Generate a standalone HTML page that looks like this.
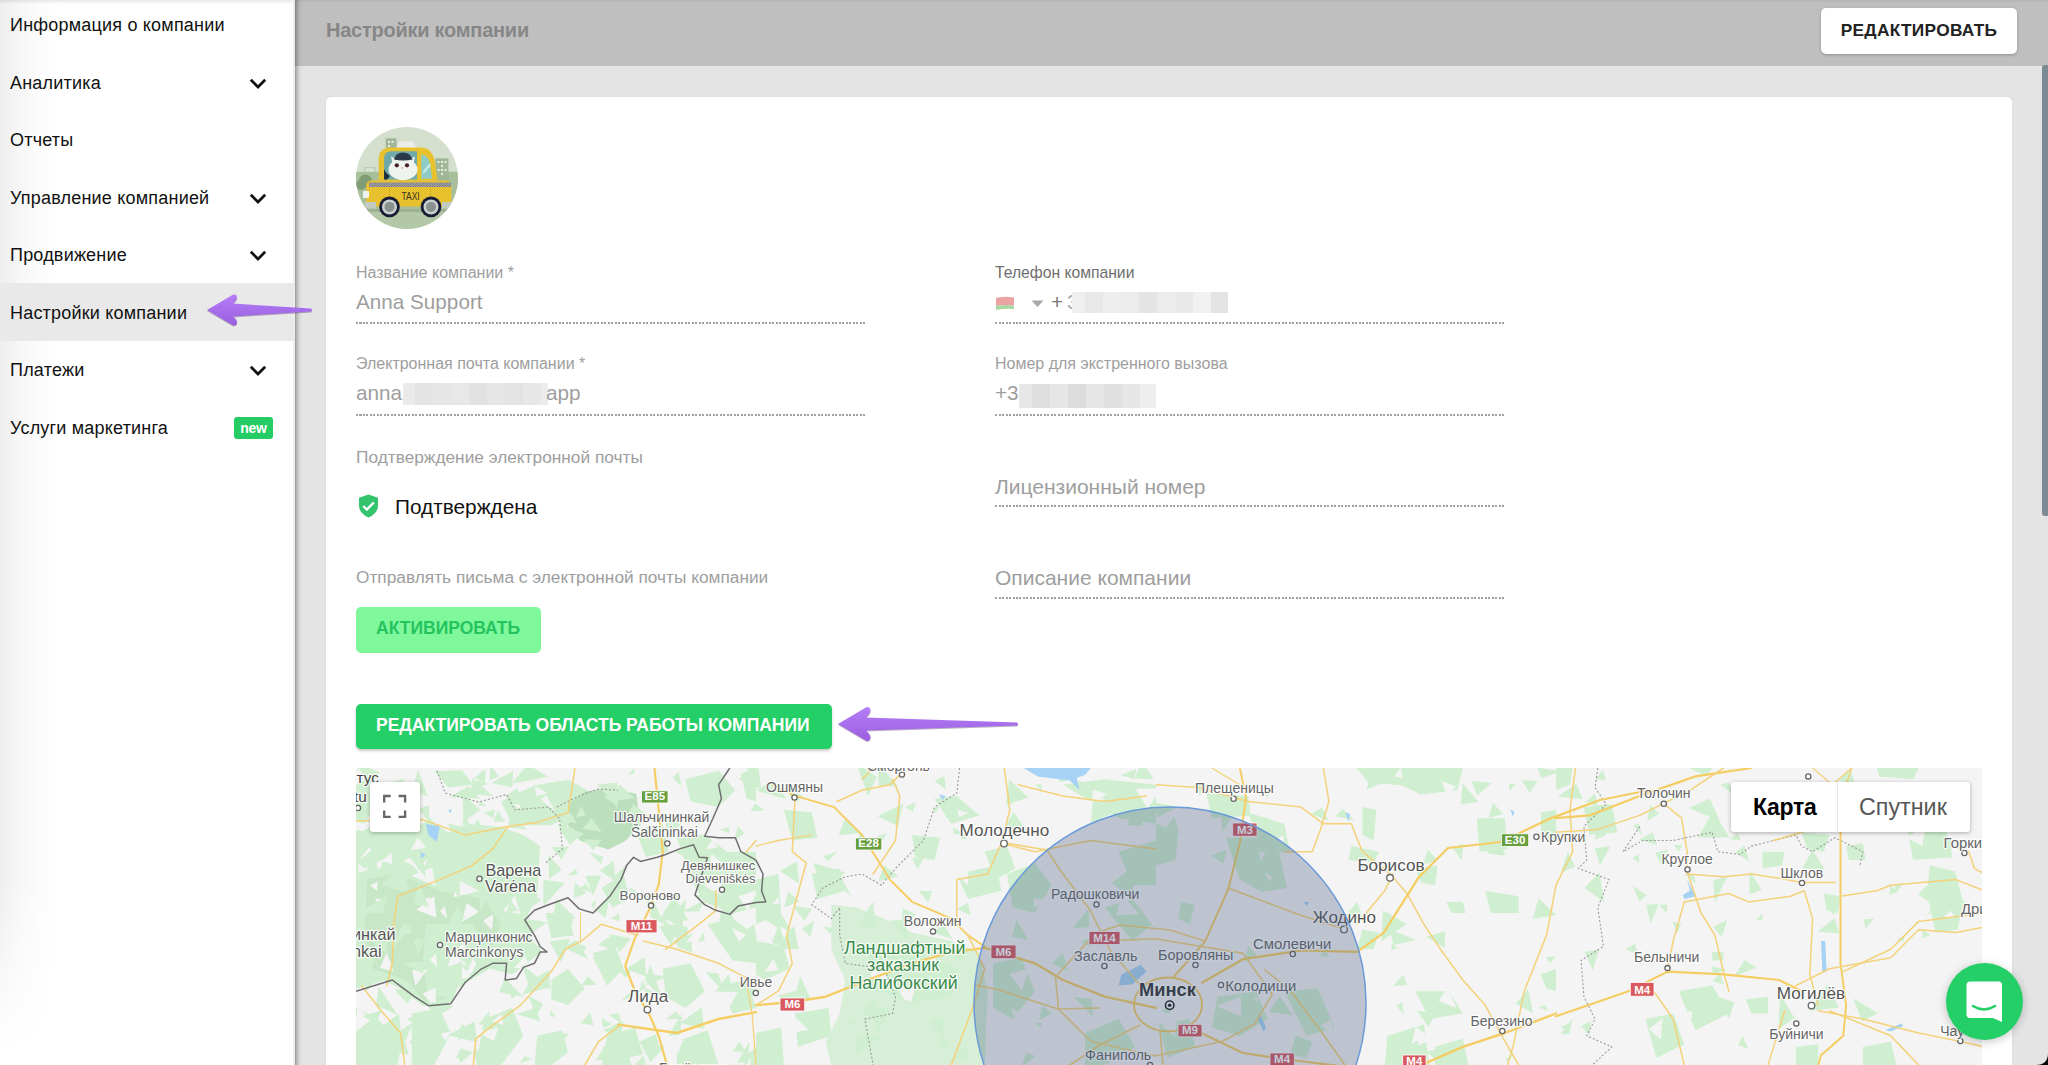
<!DOCTYPE html>
<html><head><meta charset="utf-8">
<style>
*{box-sizing:border-box;margin:0;padding:0}
html,body{width:2048px;height:1065px;overflow:hidden;background:#e4e4e4;font-family:"Liberation Sans",sans-serif}
.abs{position:absolute}
#sidebar{position:absolute;left:0;top:0;width:293px;height:1065px;background:#fff;z-index:5}
#sidebar .grad{position:absolute;left:0;top:0;width:60px;height:1065px;background:linear-gradient(90deg,#eeeeee 0,#f7f7f7 20px,#fcfcfc 40px,#fff 60px);-webkit-mask-image:linear-gradient(180deg,#000 0,#000 880px,rgba(0,0,0,0) 1050px);mask-image:linear-gradient(180deg,#000 0,#000 880px,rgba(0,0,0,0) 1050px)}
#sidebar .topgrad{position:absolute;left:0;top:0;width:293px;height:5px;background:linear-gradient(180deg,rgba(0,0,0,0.09) 0,rgba(0,0,0,0.03) 2.5px,rgba(0,0,0,0) 5px)}
.item{position:absolute;left:0;width:293px;height:58px;font-size:18px;color:#111;letter-spacing:0.2px}
.item span{position:absolute;left:10px;top:21px;line-height:18px;white-space:nowrap}
.item svg{position:absolute;left:249px;top:25px}
.active{background:#e9e9e9}
#shadow{position:absolute;left:293px;top:0;width:10px;height:1065px;background:linear-gradient(90deg,#ececec 0,#ececec 2px,rgba(0,0,0,0.33) 2px,rgba(0,0,0,0.17) 4px,rgba(0,0,0,0.05) 6.5px,rgba(0,0,0,0) 9px);z-index:4}
#header{position:absolute;left:293px;top:0;width:1755px;height:66px;background:linear-gradient(180deg,#b3b3b3 0,#bfbfbf 3px,#bfbfbf 100%)}
#header .title{position:absolute;left:33px;top:20px;font-size:20px;font-weight:700;color:#878787;line-height:21px;white-space:nowrap;letter-spacing:-0.25px}
#editbtn{position:absolute;left:1821px;top:8px;width:196px;height:46px;background:#fff;border-radius:5px;box-shadow:0 1px 3px rgba(0,0,0,.25);font-size:17.3px;font-weight:700;color:#222;text-align:center;line-height:44px;letter-spacing:0.3px}
#card{position:absolute;left:326px;top:97px;width:1686px;height:1000px;background:#fff;border-radius:5px;box-shadow:0 0 2px rgba(0,0,0,.08)}
#scroll{position:absolute;left:2042px;top:65px;width:6px;height:451px;background:#7b8a93;border-radius:3px 0 0 3px}
.lbl{position:absolute;font-size:16px;color:#9e9e9e;line-height:16px;white-space:nowrap}
.val{position:absolute;font-size:20.7px;color:#9e9e9e;line-height:21px;white-space:nowrap}
.dot{position:absolute;height:2px;background:repeating-linear-gradient(90deg,#a0a0a0 0,#a0a0a0 2px,transparent 2px,transparent 3.5px)}
.blur{position:absolute;display:flex;filter:blur(0.6px)}
.blur i{display:block;height:100%}
.sec{position:absolute;font-size:17.3px;color:#9e9e9e;line-height:17px;white-space:nowrap}
</style></head><body>

<div id="header"><div class="title">Настройки компании</div></div>
<div id="editbtn">РЕДАКТИРОВАТЬ</div>
<div id="scroll"></div>

<div id="card"></div>

<!-- avatar -->
<svg class="abs" style="left:356px;top:127px" width="102" height="102" viewBox="0 0 102 102">
  <defs><clipPath id="avc"><circle cx="51" cy="51" r="51"/></clipPath></defs>
  <g clip-path="url(#avc)">
    <rect width="102" height="102" fill="#d4dfcd"/>
    <rect x="0" y="44.8" width="102" height="40" fill="#a8bf9b"/>
    <rect x="0" y="84" width="102" height="18" fill="#b3c8a6"/>
    <rect x="0" y="82" width="102" height="3" fill="#9db292"/>
    <rect x="29.7" y="11.3" width="10.8" height="34" fill="#9fb796"/>
    <rect x="32" y="14" width="2" height="2" fill="#e8efe4"/><rect x="35.5" y="14" width="2" height="2" fill="#e8efe4"/><rect x="32" y="18" width="2" height="2" fill="#e8efe4"/>
    <rect x="79.4" y="31.3" width="13" height="24" fill="#9fb796"/>
    <rect x="81.5" y="34" width="2" height="2" fill="#e8efe4"/><rect x="85" y="34" width="2" height="2" fill="#e8efe4"/><rect x="88.5" y="34" width="2" height="2" fill="#e8efe4"/><rect x="85" y="38" width="2" height="2" fill="#e8efe4"/><rect x="81.5" y="42" width="2" height="2" fill="#e8efe4"/><rect x="85" y="42" width="2" height="2" fill="#e8efe4"/><rect x="88.5" y="42" width="2" height="2" fill="#e8efe4"/><rect x="85" y="46" width="2" height="2" fill="#e8efe4"/>
    <rect x="8.1" y="40" width="11.3" height="5" fill="#b9ccb2"/><rect x="9.5" y="41.5" width="8.5" height="1" fill="#eef3ea"/><rect x="9.5" y="43.3" width="8.5" height="1" fill="#eef3ea"/>
    <circle cx="9.5" cy="54" r="6.5" fill="#7f9c75"/><circle cx="5" cy="58" r="5" fill="#7f9c75"/>
    <path d="M40.5 21 L43 14.6 L57 14.3 L60 21 Z" fill="#ececec"/>
    <path d="M22.7 53.4 L22.7 32 Q23 21 34 20.5 L67 20.5 Q76 21.5 79 34 L81.5 53.4 Z" fill="#e7c12e"/>
    <path d="M28.1 52.4 L28.1 31 Q28.5 24.3 35 24.3 L61 24.3 L61 52.4 Z" fill="#6fa9a9"/>
    <path d="M65.3 27.5 Q72 28 74 36 L76.1 51.8 L65.3 51.8 Z" fill="#8fcbc5"/>
    <path d="M67 44 L74 36 L74.5 39 L67.5 47 Z" fill="#c9ece8"/>
    <ellipse cx="47" cy="42.5" rx="14.5" ry="10.5" fill="#eef3ee"/><path d="M37.5 33 L37 30 L40 32 Z" fill="#f2a5a5"/><path d="M56.5 33 L57 30 L54 32 Z" fill="#f2a5a5"/>
    <path d="M36.5 37 L35 29.5 L41 33 Z" fill="#eef3ee"/><path d="M57.5 37 L59 29.5 L53 33 Z" fill="#eef3ee"/>
    <path d="M37.8 32.5 Q40 25.4 47 25.4 Q54 25.4 56.7 32.5 Q47 34.5 37.8 32.5 Z" fill="#2b3a4a"/>
    <circle cx="40.8" cy="38.3" r="2.1" fill="#4a1f2a"/><circle cx="51" cy="38.3" r="2.1" fill="#4a1f2a"/>
    <path d="M45 40.5 L47.5 40.5 L46.2 42 Z" fill="#ef7a6a"/>
    <path d="M28.1 42 Q30 47 34 49 L31 52.4 L28.1 52.4 Z" fill="#1e2c3c"/>
    <rect x="10.3" y="53.5" width="85" height="26" rx="5" fill="#e7c12e"/>
    <pattern id="chk" x="0" y="55.5" width="2.4" height="4.8" patternUnits="userSpaceOnUse"><rect width="2.4" height="4.8" fill="#f4f4f4"/><rect width="1.2" height="1.2" fill="#26283a"/><rect x="1.2" y="1.2" width="1.2" height="1.2" fill="#26283a"/><rect y="2.4" width="1.2" height="1.2" fill="#26283a"/><rect x="1.2" y="3.6" width="1.2" height="1.2" fill="#26283a"/></pattern>
    <rect x="13" y="55.5" width="82" height="4.5" fill="url(#chk)"/>
    <rect x="33" y="60" width="0.6" height="15" fill="#cfa51e"/><rect x="74" y="60" width="0.6" height="15" fill="#cfa51e"/>
    <text x="45.5" y="73.5" font-size="10" fill="#3a3320" font-family="Liberation Sans" transform="scale(0.85 1)" transform-origin="45.5 73.5">TAXI</text>
    <rect x="7" y="64" width="6" height="7" rx="1" fill="#f1f3ee"/>
    <rect x="9" y="75" width="11" height="6.5" fill="#c3cbc2"/><rect x="86" y="75" width="9" height="6.5" fill="#c3cbc2"/>
    <circle cx="33.5" cy="79.9" r="10.3" fill="#191c36"/><circle cx="33.5" cy="79.9" r="7.5" fill="#c9d0cf"/><circle cx="33.5" cy="79.9" r="5" fill="#8b918f"/>
    <circle cx="75" cy="79.9" r="10.3" fill="#191c36"/><circle cx="75" cy="79.9" r="7.5" fill="#c9d0cf"/><circle cx="75" cy="79.9" r="5" fill="#8b918f"/>
  </g>
</svg>

<div class="lbl" style="left:356px;top:265px;font-size:16px">Название компании *</div>
<div class="val" style="left:356px;top:291px">Anna Support</div>
<div class="dot" style="left:356px;top:322px;width:509px"></div>

<div class="lbl" style="left:356px;top:356px">Электронная почта компании *</div>
<div class="val" style="left:356px;top:382px">anna</div>
<div class="blur" style="left:403px;top:383px;width:145px;height:22px"><i style="width:12px;background:#eaeaea"></i><i style="width:18px;background:#e4e4e4"></i><i style="width:18px;background:#e6e6e6"></i><i style="width:18px;background:#e8e8e8"></i><i style="width:18px;background:#e2e2e2"></i><i style="width:18px;background:#e6e6e6"></i><i style="width:18px;background:#e3e3e3"></i><i style="width:18px;background:#e7e7e7"></i><i style="width:7px;background:#ececec"></i></div>
<div class="val" style="left:546px;top:382px">app</div>
<div class="dot" style="left:356px;top:414px;width:509px"></div>

<div class="sec" style="left:356px;top:449px">Подтверждение электронной почты</div>
<svg class="abs" style="left:358px;top:494px" width="21" height="24" viewBox="0 0 21 24">
  <path d="M10.5 0.5 L20 3.8 L20 11 Q20 19.5 10.5 23.5 Q1 19.5 1 11 L1 3.8 Z" fill="#33c46d"/>
  <path d="M5.2 12 L8.8 15.5 L15.8 8.5" fill="none" stroke="#fff" stroke-width="2.4"/>
</svg>
<div class="val" style="left:395px;top:496px;font-size:20.8px;color:#111">Подтверждена</div>

<div class="sec" style="left:356px;top:569px">Отправлять письма с электронной почты компании</div>
<div class="abs" style="left:356px;top:607px;width:185px;height:46px;background:#7ff89c;border-radius:5px;color:#25c45f;font-size:17.5px;font-weight:700;line-height:42px;padding-left:20px;white-space:nowrap">АКТИВИРОВАТЬ</div>

<div class="abs" style="left:356px;top:704px;width:476px;height:45px;background:#23cf66;border-radius:5px;box-shadow:0 2px 3px rgba(0,0,0,.22);color:#fff;font-size:17.5px;font-weight:700;line-height:42.5px;padding-left:20px;white-space:nowrap">РЕДАКТИРОВАТЬ ОБЛАСТЬ РАБОТЫ КОМПАНИИ</div>

<!-- right column -->
<div class="lbl" style="left:995px;top:265px;font-size:15.7px;color:#6e6e6e">Телефон компании</div>
<svg class="abs" style="left:995px;top:296px" width="20" height="15" viewBox="0 0 20 15">
  <path d="M1 2 Q10 0 19 1.5 L19 9.5 Q10 8.5 1 10 Z" fill="#eaa2a2"/>
  <path d="M1 10 Q10 8.5 19 9.5 L19 13 Q10 12 1 14 Z" fill="#a9d8a3"/>
</svg>
<svg class="abs" style="left:1031px;top:300px" width="13" height="8" viewBox="0 0 13 8"><path d="M0.5 0.5 L12.5 0.5 L6.5 7 Z" fill="#a8a8a8"/></svg>
<div class="val" style="left:1051px;top:291px;color:#7a7a7a">+</div>
<div class="val" style="left:1067px;top:291px;color:#aaa;width:7px;overflow:hidden">3</div>
<div class="blur" style="left:1072px;top:292px;width:156px;height:21px"><i style="width:13px;background:#efefef"></i><i style="width:18px;background:#e8e8e8"></i><i style="width:18px;background:#eeeeee"></i><i style="width:18px;background:#ececec"></i><i style="width:18px;background:#e4e4e4"></i><i style="width:18px;background:#ececec"></i><i style="width:18px;background:#e9e9e9"></i><i style="width:18px;background:#f1f1f1"></i><i style="width:17px;background:#e3e3e3"></i></div>
<div class="dot" style="left:995px;top:322px;width:509px"></div>

<div class="lbl" style="left:995px;top:356px">Номер для экстренного вызова</div>
<div class="val" style="left:995px;top:382px">+3</div>
<div class="blur" style="left:1019px;top:384px;width:137px;height:24px"><i style="width:13px;background:#e7e7e7"></i><i style="width:18px;background:#dedede"></i><i style="width:18px;background:#e6e6e6"></i><i style="width:18px;background:#dcdcdc"></i><i style="width:18px;background:#e6e6e6"></i><i style="width:18px;background:#e0e0e0"></i><i style="width:18px;background:#e6e6e6"></i><i style="width:16px;background:#eeeeee"></i></div>
<div class="dot" style="left:995px;top:414px;width:509px"></div>

<div class="val" style="left:995px;top:476px;font-size:21px">Лицензионный номер</div>
<div class="dot" style="left:995px;top:505px;width:509px"></div>

<div class="val" style="left:995px;top:567px;font-size:21px">Описание компании</div>
<div class="dot" style="left:995px;top:597px;width:509px"></div>

<!-- arrow 2 -->
<svg class="abs" style="left:832px;top:702px" width="192" height="44" viewBox="0 0 192 44">
  <defs><linearGradient id="ag2" x1="0" y1="0" x2="0" y2="1"><stop offset="0" stop-color="#b57ef7"/><stop offset="1" stop-color="#9a5ee0"/></linearGradient></defs>
  <path d="M6 22 L33 6 Q37.5 3.5 38.5 8 Q39 11 34 15.5 L185 20.5 Q187 22 185 23.5 L34 28.5 Q39 33 38.5 36 Q37.5 40.5 33 38 Z" fill="url(#ag2)" style="filter:drop-shadow(0 1px 0.6px rgba(60,30,90,0.35))"/>
</svg>

<div id="sidebar">
  <div class="grad"></div><div class="topgrad"></div>
  <div class="item" style="top:-5px"><span>Информация о компании</span></div>
  <div class="item" style="top:53px"><span>Аналитика</span><svg width="18" height="12" viewBox="0 0 18 12"><path d="M1.8 1.8 L9 9 L16.2 1.8" fill="none" stroke="#111" stroke-width="2.7"/></svg></div>
  <div class="item" style="top:110px"><span>Отчеты</span></div>
  <div class="item" style="top:168px"><span>Управление компанией</span><svg width="18" height="12" viewBox="0 0 18 12"><path d="M1.8 1.8 L9 9 L16.2 1.8" fill="none" stroke="#111" stroke-width="2.7"/></svg></div>
  <div class="item" style="top:225px"><span>Продвижение</span><svg width="18" height="12" viewBox="0 0 18 12"><path d="M1.8 1.8 L9 9 L16.2 1.8" fill="none" stroke="#111" stroke-width="2.7"/></svg></div>
  <div class="item active" style="top:283px"><span>Настройки компании</span></div>
  <div class="item" style="top:340px"><span>Платежи</span><svg width="18" height="12" viewBox="0 0 18 12"><path d="M1.8 1.8 L9 9 L16.2 1.8" fill="none" stroke="#111" stroke-width="2.7"/></svg></div>
  <div class="item" style="top:398px"><span>Услуги маркетинга</span><div style="position:absolute;left:234px;top:19px;width:39px;height:22px;background:#24cc64;border-radius:3px;color:#fff;font-size:14px;font-weight:700;line-height:22px;text-align:center;letter-spacing:-0.2px">new</div></div>
</div>
<div id="shadow"></div>

<!-- sidebar arrow -->
<svg class="abs" style="left:200px;top:288px;z-index:6" width="120" height="44" viewBox="0 0 120 44">
  <defs><linearGradient id="ag1" x1="0" y1="0" x2="0" y2="1"><stop offset="0" stop-color="#b57ef7"/><stop offset="1" stop-color="#9a5ee0"/></linearGradient></defs>
  <path d="M7 22 L31.5 7.5 Q36 5 37 9 Q37.5 12 33 15.5 L111 20.5 Q113 22 111 23.5 L33 28.5 Q37.5 32 37 35 Q36 39 31.5 36.5 Z" fill="url(#ag1)" style="filter:drop-shadow(0 1px 0.6px rgba(60,30,90,0.35))"/>
</svg>

<!--MAP-->
<svg class="abs" style="left:356px;top:768px" width="1626" height="297" viewBox="0 0 1626 297" font-family="Liberation Sans">
<defs><clipPath id="mapclip"><rect width="1626" height="297"/></clipPath></defs>
<g clip-path="url(#mapclip)">
<rect width="1626" height="297" fill="#f4f4f4"/>
<polygon points="0.0,66.9 16.7,57.2 44.6,63.6 69.7,48.0 92.1,64.7 111.6,55.8 145.0,59.1 167.4,66.9 184.1,78.1 181.3,128.3 170.2,150.6 178.5,167.4 185.5,184.1 156.2,206.4 133.9,200.8 111.6,213.4 92.1,237.1 66.9,237.7 44.6,220.9 27.9,212.6 0.0,220.9" fill="#d0efd0"/>
<polygon points="11.2,111.6 39.1,105.4 83.7,122.7 128.3,131.1 145.0,156.2 131.1,189.7 106.0,212.0 89.3,231.5 69.7,234.3 50.2,212.0 16.7,200.8 8.4,167.4" fill="#c7e7c7"/>
<polygon points="69.7,156.2 117.2,156.2 131.1,178.5 111.6,212.0 89.3,228.7 72.5,228.7 66.9,195.3" fill="#d0efd0"/>
<polygon points="145.0,33.5 178.5,17.3 212.0,11.7 231.5,22.3 214.8,47.4 195.3,57.2 156.2,57.2" fill="#d0efd0"/>
<polygon points="212.0,36.3 228.7,23.7 251.0,20.1 280.3,25.7 284.5,57.2 269.2,73.1 252.4,81.5 224.5,73.1 211.4,57.2" fill="#bbe0bb"/>
<polygon points="78.1,3.3 106.0,2.2 117.2,16.7 92.1,19.5" fill="#d0efd0"/>
<polygon points="0.0,16.7 11.2,11.2 19.5,36.3 8.4,55.8 0.0,53.0" fill="#d0efd0"/>
<polygon points="320.8,69.7 348.7,66.4 371.0,83.7 400.0,83.7 400.0,139.5 376.6,145.6 348.7,134.4 334.7,111.6" fill="#d0efd0"/>
<polygon points="329.1,11.2 362.6,2.8 379.4,22.3 362.6,39.1 334.7,33.5" fill="#d0efd0"/>
<polygon points="384.9,5.6 400.0,0.0 400.0,33.5 390.5,30.7" fill="#d0efd0"/>
<polygon points="0.0,239.9 22.3,251.0 44.6,278.9 41.8,297.1 0.0,297.1" fill="#d0efd0"/>
<polygon points="55.8,245.5 83.7,240.4 94.8,265.6 78.1,297.1 55.8,297.1" fill="#d0efd0"/>
<polygon points="128.3,251.0 156.2,239.9 167.4,267.8 145.0,297.1 119.9,297.1" fill="#d0efd0"/>
<polygon points="195.3,212.0 212.0,200.8 228.7,220.4 212.0,237.1 195.3,231.5" fill="#d0efd0"/>
<polygon points="237.1,189.7 259.4,178.5 267.8,200.8 251.0,217.6" fill="#d0efd0"/>
<polygon points="306.8,200.8 334.7,195.3 348.7,223.2 329.1,239.9 309.6,228.7" fill="#d0efd0"/>
<polygon points="351.5,156.2 376.6,150.6 400.0,167.4 400.0,195.3 376.6,192.5" fill="#d0efd0"/>
<polygon points="320.8,273.4 351.5,262.2 362.6,297.1 320.8,297.1" fill="#d0efd0"/>
<polygon points="251.0,267.8 278.9,259.4 290.1,297.1 245.5,297.1" fill="#d0efd0"/>
<polygon points="181.3,267.8 206.4,262.2 212.0,284.5 195.3,297.1 178.5,297.1" fill="#d0efd0"/>
<polygon points="362.6,217.6 390.5,212.0 400.0,239.9 376.6,245.5" fill="#d0efd0"/>
<polygon points="189.7,145.0 212.0,145.0 217.6,167.4 195.3,170.2" fill="#d0efd0"/>
<polygon points="245.5,119.9 267.8,106.0 273.4,131.1 256.6,139.5" fill="#d0efd0"/>
<polygon points="278.9,61.4 306.8,55.8 312.4,83.7 290.1,89.3" fill="#d0efd0"/>
<polygon points="475.3,136.7 500.4,139.5 528.3,150.6 556.2,164.6 595.3,172.9 623.2,184.1 631.5,223.2 628.7,297.1 475.3,297.1 469.7,273.4 483.7,245.5 489.3,212.0 475.3,181.3" fill="#d6efd6"/>
<polygon points="511.6,181.3 556.2,178.5 600.8,200.8 595.3,228.7 556.2,234.3 517.2,220.4" fill="#d0efd0"/>
<polygon points="578.5,30.7 600.8,27.9 623.2,47.4 595.3,55.8" fill="#d0efd0"/>
<polygon points="427.9,41.8 455.8,44.6 461.4,69.7 436.3,72.5" fill="#d0efd0"/>
<polygon points="400.0,111.6 422.3,106.0 425.1,145.0 400.0,156.2" fill="#d0efd0"/>
<polygon points="706.8,16.7 748.7,11.2 800.0,16.7 800.0,55.8 762.6,50.2 734.7,33.5" fill="#d0efd0"/>
<polygon points="600.8,106.0 639.9,97.6 645.5,122.7 612.0,131.1" fill="#d0efd0"/>
<polygon points="556.2,66.9 584.1,69.7 578.5,92.1 559.0,89.3" fill="#d0efd0"/>
<polygon points="400.0,172.9 427.9,178.5 433.5,200.8 408.4,212.0 400.0,206.4" fill="#d0efd0"/>
<polygon points="439.1,245.5 472.5,239.9 475.3,267.8 441.8,278.9" fill="#d0efd0"/>
<polygon points="400.0,265.0 425.1,259.4 427.9,297.1 400.0,297.1" fill="#d0efd0"/>
<polygon points="628.7,83.7 651.0,78.1 659.4,100.4 639.9,111.6" fill="#d0efd0"/>
<polygon points="455.8,106.0 483.7,100.4 489.3,122.7 461.4,131.1" fill="#d0efd0"/>
<polygon points="651.0,106.0 678.9,94.8 695.7,117.2 678.9,145.0 656.6,139.5" fill="#d0efd0"/>
<polygon points="637.1,195.3 665.0,189.7 678.9,223.2 656.6,251.0 637.1,239.9" fill="#d0efd0"/>
<polygon points="748.7,139.5 776.6,131.1 796.1,156.2 776.6,172.9" fill="#d0efd0"/>
<polygon points="729.1,265.0 762.6,251.0 779.4,278.9 748.7,297.1 729.1,297.1" fill="#d0efd0"/>
<polygon points="762.6,83.7 800.0,72.5 800.0,117.2 776.6,117.2" fill="#d0efd0"/>
<polygon points="1000.8,0.0 1106.8,0.0 1101.3,22.3 1065.0,26.5 1045.5,17.3 1012.0,14.5" fill="#d0efd0"/>
<polygon points="1006.4,0.0 1028.7,0.0 1025.9,16.7 1012.0,11.2" fill="#d0efd0"/>
<polygon points="850.2,25.1 892.1,27.9 894.8,47.4 855.8,50.2" fill="#d0efd0"/>
<polygon points="892.1,44.6 928.3,55.8 933.9,83.7 906.0,83.7" fill="#d0efd0"/>
<polygon points="1006.4,39.1 1020.4,41.8 1017.6,72.5 1006.4,66.9" fill="#d0efd0"/>
<polygon points="995.3,78.1 1023.2,83.7 1017.6,94.8 992.5,92.1" fill="#d0efd0"/>
<polygon points="1059.4,223.2 1092.9,223.2 1106.8,245.5 1073.4,251.0" fill="#d0efd0"/>
<polygon points="1129.1,122.7 1162.6,128.3 1162.6,145.0 1134.7,145.0" fill="#d0efd0"/>
<polygon points="1090.1,133.9 1106.8,133.9 1109.6,145.0 1095.7,145.0" fill="#d0efd0"/>
<polygon points="1120.8,50.2 1148.7,50.2 1151.5,80.9 1123.6,83.7" fill="#d0efd0"/>
<polygon points="1059.4,100.4 1081.7,97.6 1078.9,117.2 1065.0,114.4" fill="#d0efd0"/>
<polygon points="1031.5,267.8 1067.8,256.6 1073.4,297.1 1028.7,297.1" fill="#d0efd0"/>
<polygon points="1078.9,278.9 1106.8,270.6 1112.4,297.1 1078.9,297.1" fill="#d0efd0"/>
<polygon points="1184.9,206.4 1200.0,200.8 1200.0,223.2 1190.5,220.4" fill="#d0efd0"/>
<polygon points="1184.9,44.6 1200.0,41.8 1200.0,72.5 1184.9,66.9" fill="#d0efd0"/>
<polygon points="1006.4,161.8 1023.2,164.6 1017.6,181.3 1000.8,181.3" fill="#d0efd0"/>
<polygon points="869.7,69.7 919.9,69.7 931.1,119.9 906.0,124.1 883.7,111.6" fill="#d0efd0"/>
<polygon points="800.0,55.8 822.3,64.2 819.5,92.1 800.0,97.6" fill="#d0efd0"/>
<polygon points="928.3,223.2 961.8,220.4 978.5,259.4 950.6,267.8" fill="#d0efd0"/>
<polygon points="861.4,228.7 900.4,223.2 911.6,251.0 883.7,267.8 855.8,259.4" fill="#d0efd0"/>
<polygon points="825.1,133.9 839.1,136.7 833.5,156.2 822.3,150.6" fill="#d0efd0"/>
<polygon points="939.5,267.8 956.2,273.4 950.6,290.1 933.9,287.3" fill="#d0efd0"/>
<polygon points="802.8,256.6 833.5,251.0 839.1,278.9 811.2,290.1" fill="#d0efd0"/>
<polygon points="1227.9,39.1 1255.8,36.3 1261.4,64.2 1233.5,66.9" fill="#d0efd0"/>
<polygon points="1551.5,61.4 1590.5,64.2 1596.1,89.3 1557.0,92.1" fill="#d0efd0"/>
<polygon points="1573.8,97.6 1598.9,103.2 1607.3,133.9 1601.7,161.8 1579.4,164.6 1571.0,125.5" fill="#d0efd0"/>
<polygon points="1289.3,251.0 1317.2,245.5 1328.3,276.2 1300.4,290.1" fill="#d0efd0"/>
<polygon points="1322.7,223.2 1356.2,217.6 1372.9,245.5 1339.5,262.2" fill="#d0efd0"/>
<polygon points="1361.8,228.7 1378.5,234.3 1372.9,251.0" fill="#d0efd0"/>
<polygon points="1389.7,231.5 1412.0,228.7 1412.0,245.5 1395.3,245.5" fill="#d0efd0"/>
<polygon points="1467.8,125.5 1484.5,128.3 1481.7,145.0 1470.6,142.3" fill="#d0efd0"/>
<polygon points="1445.5,64.2 1473.4,66.9 1467.8,83.7 1451.0,80.9" fill="#d0efd0"/>
<polygon points="1406.4,83.7 1428.7,83.7 1425.9,97.6 1406.4,100.4" fill="#d0efd0"/>
<polygon points="1356.2,184.1 1367.4,184.1 1367.4,192.5 1356.2,192.5" fill="#d0efd0"/>
<polygon points="1303.2,136.7 1311.6,136.7 1310.2,145.0" fill="#d0efd0"/>
<polygon points="1490.1,78.1 1506.8,75.3 1509.6,92.1 1492.9,92.1" fill="#d0efd0"/>
<polygon points="1200.0,0.0 1216.7,0.0 1213.9,16.7 1200.0,22.3" fill="#d0efd0"/>
<polygon points="1333.9,0.0 1356.2,0.0 1350.6,8.4" fill="#d0efd0"/>
<polygon points="1364.6,16.7 1372.9,13.9 1375.7,25.1" fill="#d0efd0"/>
<polygon points="1520.8,0.0 1562.6,0.0 1557.0,11.2 1523.6,8.4" fill="#d0efd0"/>
<polygon points="1506.8,278.9 1534.7,273.4 1540.3,297.1 1506.8,297.1" fill="#d0efd0"/>
<polygon points="1439.9,278.9 1462.2,276.2 1462.2,297.1 1439.9,297.1" fill="#d0efd0"/>
<clipPath id="gc0"><polygon points="0.0,66.9 16.7,57.2 44.6,63.6 69.7,48.0 92.1,64.7 111.6,55.8 145.0,59.1 167.4,66.9 184.1,78.1 181.3,128.3 170.2,150.6 178.5,167.4 185.5,184.1 156.2,206.4 133.9,200.8 111.6,213.4 92.1,237.1 66.9,237.7 44.6,220.9 27.9,212.6 0.0,220.9"/></clipPath><g clip-path="url(#gc0)"><polygon points="70.0,79.7 54.7,82.2 61.8,69.5" fill="#f4f4f4"/><polygon points="123.4,123.1 97.2,129.6 102.2,112.0" fill="#f4f4f4"/><polygon points="2.6,92.9 13.9,78.6 17.9,92.0" fill="#f4f4f4"/><polygon points="73.6,191.7 79.8,185.6 81.4,198.9" fill="#f4f4f4"/><polygon points="88.5,168.2 92.5,174.6 86.3,176.0" fill="#f4f4f4"/><polygon points="27.7,90.9 24.0,101.3 17.8,95.5" fill="#f4f4f4"/><polygon points="25.8,92.7 35.5,84.4 36.2,96.2" fill="#f4f4f4"/><polygon points="169.3,188.0 174.2,200.9 157.9,199.7" fill="#f4f4f4"/><polygon points="21.4,113.7 21.3,123.2 14.1,117.2" fill="#f4f4f4"/><polygon points="65.0,106.2 52.4,94.1 72.5,89.1" fill="#f4f4f4"/><polygon points="30.6,184.8 37.8,203.3 24.0,199.9" fill="#f4f4f4"/><polygon points="1.5,91.8 14.5,100.6 2.9,105.1" fill="#f4f4f4"/><polygon points="158.9,127.4 164.3,145.8 146.9,143.1" fill="#f4f4f4"/><polygon points="80.0,241.3 66.7,225.5 79.7,219.7" fill="#f4f4f4"/><polygon points="188.8,164.3 180.6,178.6 173.6,165.8" fill="#f4f4f4"/><polygon points="74.4,129.6 70.1,143.6 60.8,131.9" fill="#f4f4f4"/><polygon points="127.1,152.7 137.2,146.3 136.2,162.3" fill="#f4f4f4"/><polygon points="110.7,134.9 123.0,143.4 105.5,154.4" fill="#f4f4f4"/><polygon points="22.3,138.1 19.3,130.8 29.3,130.9" fill="#f4f4f4"/><polygon points="78.3,128.1 80.3,149.7 60.2,141.7" fill="#f4f4f4"/><polygon points="121.9,144.1 113.6,149.5 114.3,140.7" fill="#f4f4f4"/><polygon points="111.9,183.3 100.4,182.3 106.3,175.7" fill="#f4f4f4"/><polygon points="108.5,226.3 98.4,226.1 103.5,216.7" fill="#f4f4f4"/><polygon points="72.4,51.8 61.7,58.6 63.2,45.7" fill="#f4f4f4"/><polygon points="56.1,202.0 70.9,201.9 59.4,218.1" fill="#f4f4f4"/><polygon points="47.1,93.2 55.2,89.2 57.2,96.8" fill="#f4f4f4"/><polygon points="84.0,143.6 88.7,138.1 91.2,150.5" fill="#f4f4f4"/><polygon points="79.8,118.0 55.3,107.7 76.2,99.6" fill="#f4f4f4"/></g>
<clipPath id="gc1"><polygon points="69.7,156.2 117.2,156.2 131.1,178.5 111.6,212.0 89.3,228.7 72.5,228.7 66.9,195.3"/></clipPath><g clip-path="url(#gc1)"><polygon points="115.6,208.6 105.6,211.3 106.3,198.4" fill="#f4f4f4"/><polygon points="111.1,196.6 91.4,198.1 97.0,184.8" fill="#f4f4f4"/><polygon points="123.4,204.9 110.0,205.7 117.4,189.7" fill="#f4f4f4"/></g>
<clipPath id="gc2"><polygon points="145.0,33.5 178.5,17.3 212.0,11.7 231.5,22.3 214.8,47.4 195.3,57.2 156.2,57.2"/></clipPath><g clip-path="url(#gc2)"><polygon points="199.6,43.3 184.4,32.1 189.9,27.1" fill="#f4f4f4"/><polygon points="155.4,37.0 168.9,35.5 167.4,41.7" fill="#f4f4f4"/><polygon points="180.1,28.1 178.9,17.9 191.7,25.3" fill="#f4f4f4"/></g>
<clipPath id="gc3"><polygon points="320.8,69.7 348.7,66.4 371.0,83.7 400.0,83.7 400.0,139.5 376.6,145.6 348.7,134.4 334.7,111.6"/></clipPath><g clip-path="url(#gc3)"><polygon points="395.4,114.1 402.6,106.7 407.4,118.8" fill="#f4f4f4"/><polygon points="402.5,121.4 391.6,142.7 382.4,128.2" fill="#f4f4f4"/><polygon points="355.6,85.7 365.3,94.6 352.7,99.0" fill="#f4f4f4"/><polygon points="361.9,79.3 349.8,81.4 356.8,71.7" fill="#f4f4f4"/><polygon points="364.7,127.1 347.2,117.5 367.3,105.4" fill="#f4f4f4"/></g>
<clipPath id="gc4"><polygon points="0.0,239.9 22.3,251.0 44.6,278.9 41.8,297.1 0.0,297.1"/></clipPath><g clip-path="url(#gc4)"><polygon points="1.8,238.8 13.7,250.6 -1.1,257.9" fill="#f4f4f4"/><polygon points="1.2,244.3 15.0,252.1 0.2,263.5" fill="#f4f4f4"/></g>
<clipPath id="gc5"><polygon points="55.8,245.5 83.7,240.4 94.8,265.6 78.1,297.1 55.8,297.1"/></clipPath><g clip-path="url(#gc5)"><polygon points="89.0,272.7 84.9,265.4 97.7,263.1" fill="#f4f4f4"/></g>
<clipPath id="gc6"><polygon points="128.3,251.0 156.2,239.9 167.4,267.8 145.0,297.1 119.9,297.1"/></clipPath><g clip-path="url(#gc6)"><polygon points="137.7,272.9 121.8,264.2 142.6,259.7" fill="#f4f4f4"/><polygon points="136.1,253.4 145.4,246.0 147.5,256.9" fill="#f4f4f4"/></g>
<clipPath id="gc7"><polygon points="351.5,156.2 376.6,150.6 400.0,167.4 400.0,195.3 376.6,192.5"/></clipPath><g clip-path="url(#gc7)"><polygon points="383.0,173.7 375.8,159.9 390.6,166.8" fill="#f4f4f4"/></g>
<clipPath id="gc8"><polygon points="320.8,273.4 351.5,262.2 362.6,297.1 320.8,297.1"/></clipPath><g clip-path="url(#gc8)"><polygon points="327.8,270.8 320.9,287.6 317.7,275.3" fill="#f4f4f4"/></g>
<clipPath id="gc9"><polygon points="251.0,267.8 278.9,259.4 290.1,297.1 245.5,297.1"/></clipPath><g clip-path="url(#gc9)"><polygon points="276.5,299.3 273.0,289.6 288.4,286.2" fill="#f4f4f4"/></g>
<clipPath id="gc10"><polygon points="362.6,217.6 390.5,212.0 400.0,239.9 376.6,245.5"/></clipPath><g clip-path="url(#gc10)"><polygon points="381.8,224.3 371.8,242.3 362.3,220.0" fill="#f4f4f4"/></g>
<clipPath id="gc11"><polygon points="511.6,181.3 556.2,178.5 600.8,200.8 595.3,228.7 556.2,234.3 517.2,220.4"/></clipPath><g clip-path="url(#gc11)"><polygon points="546.9,200.1 533.6,200.4 545.2,189.9" fill="#f4f4f4"/><polygon points="512.2,208.6 525.9,194.3 531.8,212.7" fill="#f4f4f4"/><polygon points="576.1,196.8 573.4,187.8 585.1,182.4" fill="#f4f4f4"/><polygon points="559.9,218.1 553.2,239.8 540.4,217.8" fill="#f4f4f4"/></g>
<clipPath id="gc12"><polygon points="578.5,30.7 600.8,27.9 623.2,47.4 595.3,55.8"/></clipPath><g clip-path="url(#gc12)"><polygon points="602.8,48.9 601.3,41.4 612.6,45.0" fill="#f4f4f4"/></g>
<clipPath id="gc13"><polygon points="400.0,111.6 422.3,106.0 425.1,145.0 400.0,156.2"/></clipPath><g clip-path="url(#gc13)"><polygon points="423.8,135.3 416.1,136.3 422.0,129.0" fill="#f4f4f4"/></g>
<clipPath id="gc14"><polygon points="706.8,16.7 748.7,11.2 800.0,16.7 800.0,55.8 762.6,50.2 734.7,33.5"/></clipPath><g clip-path="url(#gc14)"><polygon points="750.6,26.1 734.5,38.1 737.3,21.8" fill="#f4f4f4"/><polygon points="738.2,37.9 738.1,31.7 749.3,29.9" fill="#f4f4f4"/><polygon points="779.5,20.8 804.7,20.4 791.7,41.0" fill="#f4f4f4"/></g>
<clipPath id="gc15"><polygon points="600.8,106.0 639.9,97.6 645.5,122.7 612.0,131.1"/></clipPath><g clip-path="url(#gc15)"><polygon points="612.3,94.8 612.1,117.6 594.7,101.4" fill="#f4f4f4"/></g>
<clipPath id="gc16"><polygon points="400.0,172.9 427.9,178.5 433.5,200.8 408.4,212.0 400.0,206.4"/></clipPath><g clip-path="url(#gc16)"><polygon points="408.9,203.5 417.8,190.4 422.2,202.2" fill="#f4f4f4"/></g>
<clipPath id="gc17"><polygon points="439.1,245.5 472.5,239.9 475.3,267.8 441.8,278.9"/></clipPath><g clip-path="url(#gc17)"><polygon points="452.4,262.1 438.6,264.3 435.9,245.7" fill="#f4f4f4"/></g>
<clipPath id="gc18"><polygon points="651.0,106.0 678.9,94.8 695.7,117.2 678.9,145.0 656.6,139.5"/></clipPath><g clip-path="url(#gc18)"><polygon points="689.9,132.6 678.4,139.9 677.6,130.2" fill="#f4f4f4"/></g>
<clipPath id="gc19"><polygon points="637.1,195.3 665.0,189.7 678.9,223.2 656.6,251.0 637.1,239.9"/></clipPath><g clip-path="url(#gc19)"><polygon points="658.5,250.4 655.3,240.3 662.9,244.2" fill="#f4f4f4"/><polygon points="653.5,205.9 673.1,200.2 665.8,222.7" fill="#f4f4f4"/></g>
<clipPath id="gc20"><polygon points="748.7,139.5 776.6,131.1 796.1,156.2 776.6,172.9"/></clipPath><g clip-path="url(#gc20)"><polygon points="783.3,146.3 760.0,147.2 766.1,127.0" fill="#f4f4f4"/></g>
<clipPath id="gc21"><polygon points="729.1,265.0 762.6,251.0 779.4,278.9 748.7,297.1 729.1,297.1"/></clipPath><g clip-path="url(#gc21)"><polygon points="758.2,295.9 750.9,290.3 758.7,288.1" fill="#f4f4f4"/></g>
<clipPath id="gc22"><polygon points="1000.8,0.0 1106.8,0.0 1101.3,22.3 1065.0,26.5 1045.5,17.3 1012.0,14.5"/></clipPath><g clip-path="url(#gc22)"><polygon points="1092.1,29.3 1085.5,13.0 1099.8,18.5" fill="#f4f4f4"/><polygon points="1044.6,-0.6 1046.8,10.1 1038.6,8.5" fill="#f4f4f4"/></g>
<clipPath id="gc23"><polygon points="892.1,44.6 928.3,55.8 933.9,83.7 906.0,83.7"/></clipPath><g clip-path="url(#gc23)"><polygon points="927.8,67.7 927.5,75.2 920.7,70.8" fill="#f4f4f4"/></g>
<clipPath id="gc24"><polygon points="1059.4,223.2 1092.9,223.2 1106.8,245.5 1073.4,251.0"/></clipPath><g clip-path="url(#gc24)"><polygon points="1082.5,232.8 1091.8,218.9 1100.3,239.9" fill="#f4f4f4"/></g>
<clipPath id="gc25"><polygon points="1031.5,267.8 1067.8,256.6 1073.4,297.1 1028.7,297.1"/></clipPath><g clip-path="url(#gc25)"><polygon points="1054.8,280.5 1059.6,258.4 1075.6,271.5" fill="#f4f4f4"/></g>
<clipPath id="gc26"><polygon points="869.7,69.7 919.9,69.7 931.1,119.9 906.0,124.1 883.7,111.6"/></clipPath><g clip-path="url(#gc26)"><polygon points="902.7,84.6 909.4,83.3 905.3,93.5" fill="#f4f4f4"/><polygon points="909.2,104.7 916.1,108.9 913.3,113.4" fill="#f4f4f4"/></g>
<clipPath id="gc27"><polygon points="928.3,223.2 961.8,220.4 978.5,259.4 950.6,267.8"/></clipPath><g clip-path="url(#gc27)"><polygon points="974.2,251.8 979.7,265.9 964.5,257.9" fill="#f4f4f4"/></g>
<clipPath id="gc28"><polygon points="861.4,228.7 900.4,223.2 911.6,251.0 883.7,267.8 855.8,259.4"/></clipPath><g clip-path="url(#gc28)"><polygon points="860.1,237.9 884.8,228.7 885.3,248.4" fill="#f4f4f4"/><polygon points="901.1,233.6 897.3,230.0 905.1,228.9" fill="#f4f4f4"/></g>
<clipPath id="gc29"><polygon points="802.8,256.6 833.5,251.0 839.1,278.9 811.2,290.1"/></clipPath><g clip-path="url(#gc29)"><polygon points="805.5,257.8 821.3,248.6 818.9,268.3" fill="#f4f4f4"/></g>
<clipPath id="gc30"><polygon points="1551.5,61.4 1590.5,64.2 1596.1,89.3 1557.0,92.1"/></clipPath><g clip-path="url(#gc30)"><polygon points="1549.9,69.7 1569.1,57.6 1567.5,78.4" fill="#f4f4f4"/></g>
<clipPath id="gc31"><polygon points="1573.8,97.6 1598.9,103.2 1607.3,133.9 1601.7,161.8 1579.4,164.6 1571.0,125.5"/></clipPath><g clip-path="url(#gc31)"><polygon points="1587.9,149.1 1594.4,142.5 1599.3,149.0" fill="#f4f4f4"/></g>
<clipPath id="gc32"><polygon points="1289.3,251.0 1317.2,245.5 1328.3,276.2 1300.4,290.1"/></clipPath><g clip-path="url(#gc32)"><polygon points="1304.7,271.6 1292.8,260.9 1307.1,250.2" fill="#f4f4f4"/></g>
<clipPath id="gc33"><polygon points="1322.7,223.2 1356.2,217.6 1372.9,245.5 1339.5,262.2"/></clipPath><g clip-path="url(#gc33)"><polygon points="1335.7,251.3 1326.3,244.7 1335.7,243.0" fill="#f4f4f4"/></g>
<polygon points="1089.4,163.3 1088.5,180.0 1070.0,168.5" fill="#d0efd0"/>
<polygon points="313.4,224.2 305.4,206.9 324.1,211.2" fill="#d0efd0"/>
<polygon points="108.4,59.3 98.8,70.8 91.5,55.4" fill="#d0efd0"/>
<polygon points="161.3,225.6 155.9,231.0 153.1,222.5" fill="#d0efd0"/>
<polygon points="408.4,293.3 387.3,289.8 405.7,274.6" fill="#d0efd0"/>
<polygon points="706.8,184.5 712.3,203.3 695.8,195.6" fill="#d0efd0"/>
<polygon points="270.9,96.1 264.4,117.8 256.9,109.8" fill="#d0efd0"/>
<polygon points="224.7,255.3 234.2,244.7 237.6,257.4" fill="#d0efd0"/>
<polygon points="1461.5,163.6 1478.2,150.2 1483.9,165.5" fill="#d0efd0"/>
<polygon points="54.4,90.1 66.6,87.0 69.9,109.6" fill="#d0efd0"/>
<polygon points="220.0,150.5 196.3,151.7 200.4,131.4" fill="#d0efd0"/>
<polygon points="510.2,243.7 521.2,239.0 520.6,252.1" fill="#d0efd0"/>
<polygon points="1023.1,16.4 1010.2,21.4 1015.7,6.8" fill="#d0efd0"/>
<polygon points="17.2,194.8 1.9,192.9 22.2,174.0" fill="#d0efd0"/>
<polygon points="133.8,123.2 124.9,143.4 121.8,117.3" fill="#d0efd0"/>
<polygon points="186.6,121.2 195.8,118.3 190.2,125.2" fill="#d0efd0"/>
<polygon points="166.5,226.5 177.2,207.0 196.1,218.8" fill="#d0efd0"/>
<polygon points="14.0,200.3 -1.2,198.6 7.7,184.6" fill="#d0efd0"/>
<polygon points="781.1,37.0 786.8,57.8 771.2,57.3" fill="#d0efd0"/>
<polygon points="247.4,88.7 245.0,96.3 232.8,84.0" fill="#d0efd0"/>
<polygon points="124.1,41.8 107.5,54.3 106.6,25.4" fill="#d0efd0"/>
<polygon points="121.7,12.5 132.4,15.7 118.1,20.2" fill="#d0efd0"/>
<polygon points="591.4,180.5 584.8,176.4 595.5,172.1" fill="#d0efd0"/>
<polygon points="58.1,171.9 67.7,173.5 62.2,187.5" fill="#d0efd0"/>
<polygon points="104.8,18.2 96.1,14.4 105.1,9.1" fill="#d0efd0"/>
<polygon points="531.2,65.1 526.5,72.7 519.9,68.9" fill="#d0efd0"/>
<polygon points="99.2,143.1 109.2,159.2 90.8,158.4" fill="#d0efd0"/>
<polygon points="600.0,54.8 588.5,48.6 598.9,45.5" fill="#d0efd0"/>
<polygon points="376.8,114.7 367.3,118.9 371.8,110.3" fill="#d0efd0"/>
<polygon points="966.1,39.4 972.4,52.5 954.9,46.2" fill="#d0efd0"/>
<polygon points="438.7,230.0 444.3,208.1 455.1,232.4" fill="#d0efd0"/>
<polygon points="180.1,247.9 172.4,227.8 187.3,236.1" fill="#d0efd0"/>
<polygon points="1499.7,49.4 1511.5,55.3 1502.3,55.8" fill="#d0efd0"/>
<polygon points="1248.1,134.5 1228.7,119.7 1243.5,104.0" fill="#d0efd0"/>
<polygon points="685.9,237.8 696.5,245.0 683.3,252.3" fill="#d0efd0"/>
<polygon points="73.0,86.4 62.2,102.7 59.0,89.9" fill="#d0efd0"/>
<polygon points="448.6,153.0 437.1,138.1 456.1,140.6" fill="#d0efd0"/>
<polygon points="1041.6,179.7 1035.2,182.6 1035.8,175.8" fill="#d0efd0"/>
<polygon points="376.7,283.4 383.4,273.7 390.0,283.8" fill="#d0efd0"/>
<polygon points="11.4,181.1 19.4,194.0 11.5,198.7" fill="#d0efd0"/>
<polygon points="419.3,181.2 438.0,158.0 442.8,181.0" fill="#d0efd0"/>
<polygon points="576.1,164.3 588.3,156.7 596.5,171.3" fill="#d0efd0"/>
<polygon points="56.0,21.7 62.2,1.9 71.8,28.7" fill="#d0efd0"/>
<polygon points="732.5,140.8 733.3,159.0 716.7,160.6" fill="#d0efd0"/>
<polygon points="1149.1,87.7 1130.9,85.4 1142.5,67.1" fill="#d0efd0"/>
<polygon points="467.2,87.9 481.3,83.8 471.7,93.3" fill="#d0efd0"/>
<polygon points="1316.4,153.4 1325.4,156.3 1320.9,165.2" fill="#d0efd0"/>
<polygon points="1062.1,283.4 1053.1,277.9 1062.1,272.4" fill="#d0efd0"/>
<polygon points="56.7,254.8 49.6,272.9 35.7,268.8" fill="#d0efd0"/>
<polygon points="277.5,-0.1 279.2,4.8 272.3,7.5" fill="#d0efd0"/>
<polygon points="235.7,124.4 224.1,120.6 229.7,115.2" fill="#d0efd0"/>
<polygon points="149.1,53.8 137.3,53.7 141.9,42.3" fill="#d0efd0"/>
<polygon points="72.2,173.2 56.4,177.3 60.8,169.5" fill="#d0efd0"/>
<polygon points="1213.0,263.9 1204.2,259.0 1214.2,255.0" fill="#d0efd0"/>
<polygon points="150.8,145.1 153.9,130.9 162.0,142.5" fill="#d0efd0"/>
<polygon points="547.3,210.3 542.1,224.7 533.7,210.9" fill="#d0efd0"/>
<polygon points="60.8,224.5 40.8,224.8 54.5,214.4" fill="#d0efd0"/>
<polygon points="29.7,263.3 42.1,280.5 15.4,273.2" fill="#d0efd0"/>
<polygon points="457.4,94.9 489.2,104.4 466.1,122.1" fill="#d0efd0"/>
<polygon points="163.6,171.4 172.1,184.4 152.7,185.0" fill="#d0efd0"/>
<polygon points="57.8,224.9 51.9,236.3 38.1,220.4" fill="#d0efd0"/>
<polygon points="93.2,29.3 112.4,18.2 123.9,30.4" fill="#d0efd0"/>
<polygon points="10.5,223.3 7.5,203.3 25.1,206.5" fill="#d0efd0"/>
<polygon points="1283.0,71.5 1296.7,64.3 1301.2,77.1" fill="#d0efd0"/>
<polygon points="1534.3,116.7 1541.2,123.8 1533.1,127.0" fill="#d0efd0"/>
<polygon points="0.7,145.0 31.2,128.0 26.9,145.5" fill="#d0efd0"/>
<polygon points="672.3,29.6 650.1,37.1 653.3,11.2" fill="#d0efd0"/>
<polygon points="521.8,113.7 528.3,97.3 542.2,108.2" fill="#d0efd0"/>
<polygon points="73.1,139.2 57.3,135.5 62.9,114.8" fill="#d0efd0"/>
<polygon points="1159.5,15.8 1153.9,23.4 1152.8,15.6" fill="#d0efd0"/>
<polygon points="393.3,273.8 392.3,295.1 381.1,294.4" fill="#d0efd0"/>
<polygon points="96.1,231.4 80.1,223.4 90.5,205.4" fill="#d0efd0"/>
<polygon points="657.3,43.7 670.9,62.8 648.0,61.3" fill="#d0efd0"/>
<polygon points="239.3,292.8 249.3,277.1 259.2,290.2" fill="#d0efd0"/>
<polygon points="187.6,32.2 185.3,40.8 178.1,35.1" fill="#d0efd0"/>
<polygon points="148.6,209.7 167.6,228.9 143.3,224.1" fill="#d0efd0"/>
<polygon points="1246.9,2.2 1249.9,12.0 1238.8,11.4" fill="#d0efd0"/>
<polygon points="322.5,4.3 325.8,18.0 316.3,9.2" fill="#d0efd0"/>
<polygon points="74.9,252.9 75.8,234.0 97.8,237.9" fill="#d0efd0"/>
<polygon points="402.3,-1.1 405.2,21.4 382.7,11.3" fill="#d0efd0"/>
<polygon points="596.1,187.7 612.2,182.6 605.8,192.9" fill="#d0efd0"/>
<polygon points="1371.5,108.0 1358.9,134.5 1357.2,112.4" fill="#d0efd0"/>
<polygon points="798.7,95.4 800.0,111.5 784.3,106.8" fill="#d0efd0"/>
<polygon points="386.8,174.9 386.9,184.4 381.5,178.6" fill="#d0efd0"/>
<polygon points="1046.3,233.9 1047.8,246.6 1040.2,237.8" fill="#d0efd0"/>
<polygon points="1051.0,216.9 1036.8,218.2 1047.3,206.5" fill="#d0efd0"/>
<polygon points="655.8,169.1 660.4,151.9 672.2,171.7" fill="#d0efd0"/>
<polygon points="50.3,154.6 53.4,166.9 43.2,161.4" fill="#d0efd0"/>
<polygon points="243.6,102.4 257.6,92.7 259.7,113.4" fill="#d0efd0"/>
<polygon points="14.6,17.0 -2.1,-5.6 23.9,4.2" fill="#d0efd0"/>
<polygon points="319.3,83.9 332.9,73.3 336.6,93.6" fill="#d0efd0"/>
<polygon points="161.4,27.5 185.7,45.9 166.9,51.1" fill="#d0efd0"/>
<polygon points="1152.2,293.9 1149.3,291.2 1157.6,285.5" fill="#d0efd0"/>
<polygon points="1588.4,160.6 1584.6,156.5 1594.3,150.8" fill="#d0efd0"/>
<polygon points="113.1,55.8 106.3,56.5 108.8,44.7" fill="#d0efd0"/>
<polygon points="567.4,90.4 561.6,101.6 555.8,90.0" fill="#d0efd0"/>
<polygon points="278.5,30.3 257.2,33.1 263.5,16.2" fill="#d0efd0"/>
<polygon points="892.1,177.7 900.4,187.0 888.8,195.3" fill="#d0efd0"/>
<polygon points="614.5,147.2 600.8,140.8 612.0,135.1" fill="#d0efd0"/>
<polygon points="116.6,114.2 130.2,96.5 138.9,110.0" fill="#d0efd0"/>
<polygon points="1499.0,53.7 1484.6,58.2 1488.5,43.5" fill="#d0efd0"/>
<polygon points="1236.7,202.6 1228.6,184.0 1243.2,181.3" fill="#d0efd0"/>
<polygon points="491.6,250.5 499.8,251.1 494.8,260.1" fill="#d0efd0"/>
<polygon points="45.6,159.9 56.0,162.5 38.6,173.4" fill="#d0efd0"/>
<polygon points="621.1,231.6 615.0,226.8 626.6,226.8" fill="#d0efd0"/>
<polygon points="1147.2,46.2 1132.6,49.8 1137.0,34.8" fill="#d0efd0"/>
<polygon points="1067.3,96.5 1072.0,81.3 1080.9,92.4" fill="#d0efd0"/>
<polygon points="1566.2,170.4 1566.4,161.5 1574.2,166.7" fill="#d0efd0"/>
<polygon points="1282.9,55.7 1286.4,68.0 1277.1,57.4" fill="#d0efd0"/>
<polygon points="210.5,39.7 221.4,55.2 205.6,52.7" fill="#d0efd0"/>
<polygon points="19.0,255.6 6.6,247.8 26.2,242.2" fill="#d0efd0"/>
<polygon points="867.3,95.7 855.4,87.8 871.4,80.9" fill="#d0efd0"/>
<polygon points="308.4,156.6 294.0,148.4 296.0,129.5" fill="#d0efd0"/>
<polygon points="381.0,93.1 403.2,97.4 382.6,110.4" fill="#d0efd0"/>
<polygon points="235.2,136.5 240.2,131.7 238.3,141.2" fill="#d0efd0"/>
<polygon points="1322.5,83.3 1317.6,76.9 1326.7,76.9" fill="#d0efd0"/>
<polygon points="295.2,165.2 285.5,162.0 295.5,152.4" fill="#d0efd0"/>
<polygon points="113.3,260.2 119.1,264.1 116.5,270.6" fill="#d0efd0"/>
<polygon points="433.5,234.0 420.5,228.1 444.1,221.5" fill="#d0efd0"/>
<polygon points="685.4,16.3 686.5,24.5 679.5,16.3" fill="#d0efd0"/>
<polygon points="311.5,151.1 330.0,131.8 326.0,161.4" fill="#d0efd0"/>
<polygon points="22.9,218.7 41.6,246.9 19.9,237.3" fill="#d0efd0"/>
<polygon points="406.7,148.4 398.6,145.3 401.6,142.3" fill="#d0efd0"/>
<polygon points="1365.6,168.9 1357.0,159.1 1371.4,151.9" fill="#d0efd0"/>
<polygon points="784.6,147.0 787.4,156.3 777.2,148.3" fill="#d0efd0"/>
<polygon points="535.3,207.2 546.8,189.7 557.1,201.6" fill="#d0efd0"/>
<polygon points="288.9,229.3 289.0,220.5 297.5,223.5" fill="#d0efd0"/>
<polygon points="702.7,14.1 706.2,-5.9 721.2,10.6" fill="#d0efd0"/>
<polygon points="77.6,246.2 77.4,235.9 84.3,239.6" fill="#d0efd0"/>
<polygon points="1357.1,206.0 1355.9,198.1 1370.8,202.1" fill="#d0efd0"/>
<polygon points="1107.4,75.4 1105.7,92.6 1096.9,80.1" fill="#d0efd0"/>
<polygon points="359.3,13.8 352.8,36.4 340.7,24.6" fill="#d0efd0"/>
<polygon points="272.5,45.8 277.4,35.8 293.4,48.7" fill="#d0efd0"/>
<polygon points="44.9,194.7 71.5,193.2 66.4,205.2" fill="#d0efd0"/>
<polygon points="670.5,284.8 679.5,288.0 664.9,299.8" fill="#d0efd0"/>
<polygon points="1238.6,72.1 1243.0,53.9 1250.4,66.9" fill="#d0efd0"/>
<polygon points="229.4,108.0 245.0,107.5 237.2,128.2" fill="#d0efd0"/>
<polygon points="1282.0,187.0 1269.5,181.1 1279.2,175.8" fill="#d0efd0"/>
<polygon points="376.9,223.9 359.5,223.5 372.7,206.3" fill="#d0efd0"/>
<polygon points="274.2,119.1 282.8,125.4 272.8,127.9" fill="#d0efd0"/>
<polygon points="612.4,67.9 597.9,65.8 596.7,59.0" fill="#d0efd0"/>
<polygon points="812.1,235.2 814.4,245.9 806.1,243.5" fill="#d0efd0"/>
<polygon points="23.8,260.1 43.0,245.5 46.3,278.2" fill="#d0efd0"/>
<polygon points="1480.3,139.7 1477.6,147.4 1471.7,139.9" fill="#d0efd0"/>
<polygon points="323.4,16.7 317.5,10.9 323.8,10.9" fill="#d0efd0"/>
<polygon points="71.0,235.8 77.6,235.8 76.8,246.4" fill="#d0efd0"/>
<polygon points="270.0,201.0 288.5,189.2 290.2,208.6" fill="#d0efd0"/>
<polygon points="220.0,101.3 222.1,106.5 211.2,107.5" fill="#d0efd0"/>
<polygon points="263.9,234.1 273.6,224.7 276.7,227.6" fill="#d0efd0"/>
<polygon points="1121.3,27.6 1115.4,12.9 1135.8,14.8" fill="#d0efd0"/>
<polygon points="515.5,73.7 500.9,81.2 503.2,64.7" fill="#d0efd0"/>
<polygon points="552.9,174.7 534.3,152.5 548.6,152.1" fill="#d0efd0"/>
<polygon points="291.9,128.6 285.4,132.1 284.0,123.4" fill="#d0efd0"/>
<polygon points="263.1,184.2 255.2,166.2 275.1,170.4" fill="#d0efd0"/>
<polygon points="103.8,130.9 92.3,113.9 104.0,107.8" fill="#d0efd0"/>
<polygon points="338.3,17.4 340.9,23.1 334.9,23.3" fill="#d0efd0"/>
<polygon points="735.0,55.1 737.0,30.7 759.5,44.3" fill="#d0efd0"/>
<polygon points="267.8,253.6 263.5,272.4 247.3,262.0" fill="#d0efd0"/>
<polygon points="1241.2,38.9 1229.1,33.7 1239.1,25.5" fill="#d0efd0"/>
<polygon points="214.9,160.4 203.4,158.0 211.0,147.0" fill="#d0efd0"/>
<polygon points="1388.5,49.3 1397.1,53.5 1392.3,57.2" fill="#d0efd0"/>
<polygon points="346.4,121.8 333.1,112.8 350.6,101.7" fill="#d0efd0"/>
<polygon points="1303.0,135.4 1294.6,155.9 1290.3,136.9" fill="#d0efd0"/>
<polygon points="568.8,204.0 574.6,216.1 557.4,214.6" fill="#d0efd0"/>
<polygon points="399.1,35.5 408.9,42.3 394.1,43.5" fill="#d0efd0"/>
<polygon points="25.2,275.4 17.4,276.1 18.1,268.9" fill="#d0efd0"/>
<polygon points="245.7,72.0 237.2,82.2 227.0,71.3" fill="#d0efd0"/>
<polygon points="1388.5,192.2 1400.8,199.5 1378.1,208.8" fill="#d0efd0"/>
<polygon points="560.8,146.8 545.5,155.3 546.8,140.2" fill="#d0efd0"/>
<polygon points="923.8,228.0 936.9,247.5 912.9,243.9" fill="#d0efd0"/>
<polygon points="335.4,173.3 336.3,184.6 320.0,178.7" fill="#d0efd0"/>
<polygon points="53.0,287.0 32.1,282.2 45.6,264.1" fill="#d0efd0"/>
<polygon points="447.3,254.3 460.2,250.8 455.7,262.1" fill="#d0efd0"/>
<polygon points="235.5,50.1 245.6,63.9 226.7,60.7" fill="#d0efd0"/>
<polygon points="1009.1,102.4 1003.8,95.8 1015.9,95.5" fill="#d0efd0"/>
<polygon points="1522.2,245.3 1505.9,253.2 1497.4,230.4" fill="#d0efd0"/>
<polygon points="1211.8,83.6 1219.2,98.8 1204.9,104.4" fill="#d0efd0"/>
<polygon points="1561.7,126.6 1580.0,109.0 1573.2,133.5" fill="#d0efd0"/>
<polygon points="116.7,9.5 137.2,28.4 114.1,25.5" fill="#d0efd0"/>
<polygon points="865.9,64.2 865.8,39.5 875.5,49.7" fill="#d0efd0"/>
<polygon points="1357.0,43.0 1373.5,69.5 1342.3,69.4" fill="#d0efd0"/>
<polygon points="347.6,164.3 348.9,172.4 341.8,173.9" fill="#d0efd0"/>
<polygon points="11.8,185.3 8.9,203.3 -4.5,205.6" fill="#d0efd0"/>
<polygon points="458.4,153.0 454.4,169.1 445.6,160.6" fill="#d0efd0"/>
<polygon points="1581.1,132.3 1582.3,140.1 1570.9,147.5" fill="#d0efd0"/>
<polygon points="1446.1,100.7 1456.8,81.8 1468.2,101.0" fill="#d0efd0"/>
<polygon points="187.3,111.6 208.6,115.0 187.3,138.6" fill="#d0efd0"/>
<polygon points="75.2,76.8 78.8,88.2 67.4,92.7" fill="#d0efd0"/>
<polygon points="608.3,278.4 613.7,289.2 595.3,291.7" fill="#d0efd0"/>
<polygon points="363.7,61.4 373.3,59.0 373.0,65.4" fill="#d0efd0"/>
<polygon points="504.6,64.4 482.6,67.5 489.3,50.1" fill="#d0efd0"/>
<polygon points="291.3,217.6 288.6,205.5 309.9,208.6" fill="#d0efd0"/>
<polygon points="568.9,227.8 547.3,209.8 569.7,209.8" fill="#d0efd0"/>
<polygon points="1379.3,84.8 1388.4,76.9 1393.4,93.3" fill="#d0efd0"/>
<polygon points="1548.3,167.5 1547.7,173.6 1540.8,171.8" fill="#d0efd0"/>
<polygon points="132.0,285.0 134.4,270.6 142.2,284.6" fill="#d0efd0"/>
<polygon points="1060.1,171.9 1037.4,176.9 1034.0,161.6" fill="#d0efd0"/>
<polygon points="56.9,73.8 56.0,64.9 62.3,67.2" fill="#d0efd0"/>
<polygon points="973.8,188.5 963.5,188.3 968.7,182.7" fill="#d0efd0"/>
<polygon points="140.1,293.3 139.2,285.2 150.8,292.9" fill="#d0efd0"/>
<polygon points="325.4,166.4 309.8,167.8 307.2,151.2" fill="#d0efd0"/>
<polygon points="213.6,265.1 197.0,284.2 194.7,266.9" fill="#d0efd0"/>
<polygon points="118.6,253.5 121.3,274.2 91.4,267.2" fill="#d0efd0"/>
<polygon points="194.1,247.9 194.3,241.0 199.4,248.9" fill="#d0efd0"/>
<polygon points="443.4,133.3 428.0,139.6 432.2,123.6" fill="#d0efd0"/>
<polygon points="589.0,249.9 584.9,268.7 572.5,251.0" fill="#d0efd0"/>
<polygon points="109.1,148.9 95.2,155.6 100.8,137.8" fill="#d0efd0"/>
<polygon points="265.2,255.6 252.9,246.7 263.0,244.9" fill="#d0efd0"/>
<polygon points="1283.3,133.7 1276.9,117.7 1290.8,127.2" fill="#d0efd0"/>
<polygon points="1392.6,281.2 1382.1,277.0 1386.5,268.5" fill="#d0efd0"/>
<polygon points="128.9,15.2 118.4,9.8 129.5,0.9" fill="#d0efd0"/>
<polygon points="123.5,284.6 120.4,296.0 117.8,279.1" fill="#d0efd0"/>
<polygon points="103.9,295.1 101.9,286.9 114.4,287.2" fill="#d0efd0"/>
<polygon points="101.9,273.3 105.6,255.4 114.2,262.4" fill="#d0efd0"/>
<polygon points="394.7,286.7 411.8,292.0 393.8,309.2" fill="#d0efd0"/>
<polygon points="230.4,125.3 217.8,130.3 218.9,114.0" fill="#d0efd0"/>
<polygon points="393.5,292.3 387.6,300.8 389.1,291.9" fill="#d0efd0"/>
<polygon points="1291.2,53.1 1294.0,36.8 1303.1,45.7" fill="#d0efd0"/>
<polygon points="425.9,162.3 407.3,150.6 422.9,146.1" fill="#d0efd0"/>
<polygon points="483.7,118.4 484.0,107.3 495.2,128.3" fill="#d0efd0"/>
<polygon points="431.7,180.1 415.6,174.5 422.6,157.4" fill="#d0efd0"/>
<polygon points="232.2,208.3 240.5,216.8 225.2,217.5" fill="#d0efd0"/>
<polygon points="52.9,120.7 38.2,122.0 45.6,100.0" fill="#d0efd0"/>
<polygon points="131.4,74.5 113.2,62.9 121.9,50.8" fill="#d0efd0"/>
<polygon points="1518.4,150.6 1509.4,160.5 1507.8,151.4" fill="#d0efd0"/>
<polygon points="440.9,93.6 443.3,115.9 424.1,103.0" fill="#d0efd0"/>
<polygon points="290.3,220.0 283.0,224.3 286.8,212.0" fill="#d0efd0"/>
<polygon points="498.5,286.3 502.0,265.1 525.1,270.1" fill="#d0efd0"/>
<polygon points="154.5,48.0 171.9,61.8 151.7,59.3" fill="#d0efd0"/>
<polygon points="91.6,184.2 84.5,168.5 102.9,167.6" fill="#d0efd0"/>
<polygon points="157.1,3.0 156.4,19.6 135.1,14.8" fill="#d0efd0"/>
<polygon points="405.5,222.2 387.7,233.7 382.2,217.3" fill="#d0efd0"/>
<polygon points="1244.1,97.3 1238.8,80.3 1254.4,78.2" fill="#d0efd0"/>
<polygon points="122.4,256.6 132.9,243.4 135.6,256.9" fill="#d0efd0"/>
<polygon points="731.0,14.2 727.6,21.8 721.1,13.0" fill="#d0efd0"/>
<polygon points="255.3,258.4 266.1,252.7 263.3,267.1" fill="#d0efd0"/>
<polygon points="1423.0,47.6 1421.2,55.0 1416.6,46.7" fill="#d0efd0"/>
<polygon points="160.5,245.9 179.6,239.7 184.5,253.7" fill="#d0efd0"/>
<polygon points="521.7,225.7 517.3,218.0 526.3,214.7" fill="#d0efd0"/>
<polygon points="160.5,154.9 160.3,164.8 148.5,160.4" fill="#d0efd0"/>
<polygon points="1406.2,144.9 1406.9,151.3 1400.7,152.3" fill="#d0efd0"/>
<polygon points="311.1,65.7 308.8,48.7 325.4,56.8" fill="#d0efd0"/>
<polygon points="232.5,191.6 208.0,179.6 220.0,171.6" fill="#d0efd0"/>
<polygon points="124.9,203.1 118.0,185.0 132.9,186.5" fill="#d0efd0"/>
<polygon points="213.9,76.6 207.7,58.0 228.1,65.4" fill="#d0efd0"/>
<polygon points="29.6,185.4 14.4,171.8 33.5,162.7" fill="#d0efd0"/>
<polygon points="40.7,224.7 50.6,213.3 49.7,233.8" fill="#d0efd0"/>
<polygon points="1025.4,173.6 1027.0,142.3 1050.7,156.1" fill="#d0efd0"/>
<polygon points="1181.2,-0.4 1204.5,3.3 1185.7,10.2" fill="#d0efd0"/>
<polygon points="611.2,71.2 605.1,70.7 604.8,62.4" fill="#d0efd0"/>
<polygon points="252.7,181.1 244.2,199.1 236.4,184.9" fill="#d0efd0"/>
<polygon points="737.8,169.5 735.9,179.1 724.3,173.6" fill="#d0efd0"/>
<polygon points="1453.0,242.8 1471.7,216.6 1482.7,239.7" fill="#d0efd0"/>
<polygon points="331.5,169.4 317.1,165.7 326.8,156.4" fill="#d0efd0"/>
<polygon points="26.8,16.3 48.6,10.8 38.7,26.1" fill="#d0efd0"/>
<polygon points="1338.2,105.9 1339.6,115.5 1328.8,105.9" fill="#d0efd0"/>
<polygon points="54.4,155.9 55.6,165.6 47.7,166.1" fill="#d0efd0"/>
<polygon points="809.9,60.1 818.2,48.3 823.5,66.2" fill="#d0efd0"/>
<polygon points="1226.8,31.3 1201.7,28.8 1220.2,15.8" fill="#d0efd0"/>
<polygon points="73.5,53.5 61.7,41.0 72.8,37.2" fill="#d0efd0"/>
<polygon points="1104.9,36.8 1106.6,15.1 1122.3,33.8" fill="#d0efd0"/>
<polygon points="242.2,176.7 252.5,168.9 259.2,183.4" fill="#d0efd0"/>
<polygon points="329.6,166.7 322.7,176.4 316.4,162.6" fill="#d0efd0"/>
<polygon points="105.9,214.4 80.1,205.2 106.0,193.3" fill="#d0efd0"/>
<polygon points="1204.8,266.0 1216.6,250.2 1213.3,266.5" fill="#d0efd0"/>
<polygon points="323.7,255.1 345.9,239.3 347.7,261.1" fill="#d0efd0"/>
<polygon points="160.8,20.0 169.8,37.2 149.1,28.6" fill="#d0efd0"/>
<polygon points="134.8,136.8 147.4,139.6 139.2,146.1" fill="#d0efd0"/>
<polygon points="238.8,141.8 253.6,128.4 249.6,149.8" fill="#d0efd0"/>
<polygon points="294.4,196.2 306.3,231.0 289.1,212.3" fill="#d0efd0"/>
<polygon points="764.7,6.9 780.2,1.2 778.3,11.2" fill="#d0efd0"/>
<polygon points="326.8,143.5 349.0,131.6 343.4,143.5" fill="#d0efd0"/>
<polygon points="1072.1,258.3 1060.9,242.9 1080.7,245.2" fill="#d0efd0"/>
<polygon points="299.8,266.1 303.3,279.3 281.0,275.1" fill="#d0efd0"/>
<polygon points="357.4,126.2 341.6,131.8 345.1,114.1" fill="#d0efd0"/>
<polygon points="179.3,125.3 177.5,137.8 168.3,129.8" fill="#d0efd0"/>
<polygon points="210.2,54.4 204.5,59.4 201.3,56.4" fill="#d0efd0"/>
<polygon points="1304.3,256.0 1322.2,255.9 1314.4,270.4" fill="#d0efd0"/>
<polygon points="171.6,-3.6 192.0,8.8 155.6,15.7" fill="#d0efd0"/>
<polygon points="837.9,17.1 849.0,14.5 843.9,28.1" fill="#d0efd0"/>
<polygon points="1482.1,11.8 1494.4,2.0 1499.5,17.0" fill="#d0efd0"/>
<polygon points="275.3,202.4 269.6,209.8 263.4,201.9" fill="#d0efd0"/>
<polygon points="1595.3,91.5 1587.5,76.8 1595.4,71.3" fill="#d0efd0"/>
<polygon points="261.5,37.2 247.3,28.9 261.7,22.8" fill="#d0efd0"/>
<polygon points="1422.6,261.0 1423.8,225.4 1438.6,250.1" fill="#d0efd0"/>
<polygon points="1582.3,148.4 1590.1,123.6 1610.6,134.5" fill="#d0efd0"/>
<polygon points="395.2,121.5 392.2,113.4 399.1,117.9" fill="#d0efd0"/>
<polygon points="1568.1,66.9 1582.4,82.9 1565.0,87.9" fill="#d0efd0"/>
<polygon points="519.7,161.9 501.5,156.2 517.1,133.8" fill="#d0efd0"/>
<polygon points="1159.5,235.7 1172.0,221.1 1177.2,245.2" fill="#d0efd0"/>
<polygon points="168.3,288.3 176.7,290.8 163.5,295.7" fill="#d0efd0"/>
<polygon points="580.2,279.8 587.6,267.1 596.4,281.6" fill="#d0efd0"/>
<polygon points="127.6,44.6 139.1,41.8 137.2,50.0" fill="#d0efd0"/>
<polygon points="73.0,60.7 71.8,47.5 79.5,55.9" fill="#d0efd0"/>
<polygon points="512.1,27.8 500.0,-5.3 521.0,9.2" fill="#d0efd0"/>
<polygon points="183.7,210.8 173.3,219.3 165.8,196.5" fill="#d0efd0"/>
<polygon points="914.5,22.2 910.9,28.9 907.0,24.4" fill="#d0efd0"/>
<polygon points="367.1,132.6 378.2,150.6 363.2,153.3" fill="#d0efd0"/>
<polygon points="292.7,123.0 295.8,131.9 289.8,135.5" fill="#d0efd0"/>
<polygon points="562.7,123.0 576.4,122.9 572.0,134.6" fill="#d0efd0"/>
<polygon points="225.6,38.1 229.6,47.6 219.8,49.4" fill="#d0efd0"/>
<polygon points="324.6,266.7 312.7,267.9 325.3,245.4" fill="#d0efd0"/>
<polygon points="37.1,180.6 33.5,171.5 47.4,167.9" fill="#d0efd0"/>
<polygon points="125.2,184.2 131.0,176.1 135.0,181.4" fill="#d0efd0"/>
<polygon points="577.5,207.9 587.9,218.3 573.1,225.7" fill="#d0efd0"/>
<polygon points="768.6,124.1 757.9,131.7 757.1,123.5" fill="#d0efd0"/>
<polygon points="330.6,170.0 321.5,156.8 332.0,159.4" fill="#d0efd0"/>
<polygon points="326.2,180.8 316.2,173.0 336.5,165.4" fill="#d0efd0"/>
<polygon points="284.4,275.3 308.8,278.6 294.6,294.3" fill="#d0efd0"/>
<polygon points="339.5,295.6 340.2,279.0 355.3,282.8" fill="#d0efd0"/>
<polygon points="0.1,90.3 12.3,93.6 8.7,101.3" fill="#d0efd0"/>
<polygon points="179.0,137.1 174.5,127.2 186.1,131.2" fill="#d0efd0"/>
<polygon points="226.9,184.9 221.9,175.1 230.6,179.1" fill="#d0efd0"/>
<polygon points="521.7,48.3 547.2,35.3 542.3,57.9" fill="#d0efd0"/>
<polygon points="584.5,36.3 579.4,45.2 576.7,41.9" fill="#d0efd0"/>
<polygon points="34.1,34.5 47.1,34.1 34.2,48.7" fill="#d0efd0"/>
<polygon points="1188.6,237.0 1192.6,243.0 1182.6,239.5" fill="#d0efd0"/>
<polygon points="785.8,-6.8 797.7,10.9 778.6,10.8" fill="#d0efd0"/>
<polygon points="191.1,154.2 168.3,170.2 167.8,150.5" fill="#d0efd0"/>
<polygon points="388.7,65.5 378.2,72.5 381.9,58.4" fill="#d0efd0"/>
<polygon points="1547.4,115.2 1538.9,126.5 1539.4,116.1" fill="#d0efd0"/>
<polygon points="776.7,98.6 777.6,133.8 756.1,114.8" fill="#d0efd0"/>
<polygon points="0.2,69.6 -7.0,60.9 9.5,63.4" fill="#d0efd0"/>
<polygon points="142.8,8.3 133.7,12.5 134.1,-3.3" fill="#d0efd0"/>
<polygon points="1381.5,64.7 1385.0,72.2 1373.5,71.2" fill="#d0efd0"/>
<polygon points="61.2,279.2 53.0,274.7 68.3,262.2" fill="#d0efd0"/>
<polygon points="392.2,18.5 391.5,-1.5 402.8,1.4" fill="#d0efd0"/>
<polygon points="979.7,48.2 986.4,41.0 999.1,52.5" fill="#d0efd0"/>
<polygon points="1332.7,40.0 1353.8,30.6 1363.8,53.3" fill="#d0efd0"/>
<polygon points="1001.2,133.7 1007.3,151.7 987.0,150.7" fill="#d0efd0"/>
<polygon points="218.4,49.0 205.4,65.0 203.2,37.2" fill="#d0efd0"/>
<polygon points="18.9,79.7 21.5,104.0 -0.4,95.3" fill="#d0efd0"/>
<polygon points="50.3,251.7 69.3,241.9 68.5,258.9" fill="#d0efd0"/>
<polygon points="332.5,152.3 302.7,152.8 317.9,128.2" fill="#d0efd0"/>
<polygon points="1081.8,293.3 1070.4,283.8 1084.9,280.1" fill="#d0efd0"/>
<polygon points="1283.3,94.7 1276.3,89.9 1282.9,86.4" fill="#d0efd0"/>
<polygon points="124.0,32.9 130.4,38.0 122.0,37.9" fill="#d0efd0"/>
<polygon points="1568.7,50.8 1579.1,44.6 1578.3,55.2" fill="#d0efd0"/>
<polygon points="15.7,288.0 40.1,296.6 20.2,303.1" fill="#d0efd0"/>
<polygon points="522.4,-4.0 542.3,18.4 522.4,17.5" fill="#d0efd0"/>
<polygon points="467.2,158.3 480.6,160.7 473.5,165.0" fill="#d0efd0"/>
<polygon points="918.5,63.5 904.2,65.9 909.7,48.5" fill="#d0efd0"/>
<polygon points="200.0,289.6 191.1,280.9 200.2,279.7" fill="#d0efd0"/>
<polygon points="25.5,117.1 49.5,93.9 51.7,124.9" fill="#d0efd0"/>
<polygon points="381.9,224.5 394.8,223.2 385.2,235.4" fill="#d0efd0"/>
<polygon points="679.1,255.5 686.0,254.6 684.4,260.1" fill="#d0efd0"/>
<polygon points="548.8,38.9 559.8,34.2 556.8,43.7" fill="#d0efd0"/>
<polygon points="250.3,187.8 254.5,165.7 266.6,174.0" fill="#d0efd0"/>
<polygon points="94.9,74.1 83.5,89.3 87.4,72.5" fill="#d0efd0"/>
<polygon points="1234.4,253.2 1233.9,267.5 1225.2,258.0" fill="#d0efd0"/>
<polygon points="214.4,170.4 205.0,194.2 193.7,173.5" fill="#d0efd0"/>
<polygon points="536.1,241.0 520.5,266.2 515.9,238.4" fill="#d0efd0"/>
<polygon points="125.5,103.9 117.7,93.3 130.1,91.0" fill="#d0efd0"/>
<polygon points="442.0,21.8 435.1,31.5 431.8,18.0" fill="#d0efd0"/>
<polygon points="128.6,65.6 147.7,57.5 139.8,79.8" fill="#d0efd0"/>
<polygon points="256.1,256.3 247.3,259.8 245.5,250.1" fill="#d0efd0"/>
<polygon points="52.8,73.6 35.7,75.0 49.4,56.1" fill="#d0efd0"/>
<polygon points="1190.1,189.4 1199.7,188.2 1194.2,194.7" fill="#d0efd0"/>
<polygon points="202.4,60.0 217.6,60.1 214.3,77.5" fill="#d0efd0"/>
<polygon points="1306.2,97.9 1299.0,85.0 1311.8,81.8" fill="#d0efd0"/>
<polygon points="212.8,78.3 205.7,91.4 195.7,79.5" fill="#d0efd0"/>
<polygon points="254.7,150.5 262.7,145.5 264.0,153.4" fill="#d0efd0"/>
<polygon points="105.0,280.2 118.8,285.1 99.8,290.4" fill="#d0efd0"/>
<polygon points="362.4,205.6 367.5,223.4 349.3,203.9" fill="#d0efd0"/>
<polygon points="191.9,86.3 205.7,101.6 193.3,110.9" fill="#d0efd0"/>
<polygon points="447.0,27.5 440.9,34.7 440.3,25.3" fill="#d0efd0"/>
<polygon points="1405.5,121.8 1393.3,126.4 1393.8,102.9" fill="#d0efd0"/>
<polygon points="519.0,232.0 524.1,250.5 504.5,244.2" fill="#d0efd0"/>
<polygon points="216.6,157.5 203.7,148.1 216.6,146.0" fill="#d0efd0"/>
<polygon points="160.0,88.3 134.6,89.7 148.0,64.0" fill="#d0efd0"/>
<polygon points="302.9,158.3 323.8,155.7 314.8,176.9" fill="#d0efd0"/>
<polygon points="717.6,228.8 735.7,230.9 736.9,248.4" fill="#d0efd0"/>
<polygon points="193.9,221.2 171.0,215.1 193.5,201.7" fill="#d0efd0"/>
<polygon points="323.0,127.6 319.9,132.8 315.3,125.5" fill="#d0efd0"/>
<polygon points="422.6,142.3 438.7,167.6 416.0,152.1" fill="#d0efd0"/>
<polygon points="1356.7,213.3 1364.0,205.2 1367.9,216.4" fill="#d0efd0"/>
<polygon points="319.2,243.5 327.7,250.8 309.8,251.6" fill="#d0efd0"/>
<polygon points="261.8,14.8 261.7,40.3 241.3,16.3" fill="#d0efd0"/>
<polygon points="797.8,33.9 822.0,38.9 801.9,49.3" fill="#d0efd0"/>
<polygon points="430.9,31.2 400.4,22.8 416.6,12.2" fill="#d0efd0"/>
<polygon points="386.3,164.8 398.2,156.1 400.9,172.6" fill="#d0efd0"/>
<polygon points="1165.6,11.8 1181.3,13.2 1173.7,25.0" fill="#d0efd0"/>
<polygon points="1200.3,146.9 1176.8,150.8 1182.5,130.3" fill="#d0efd0"/>
<polygon points="578.4,13.0 588.2,8.1 590.0,21.4" fill="#d0efd0"/>
<polygon points="69.7,55.8 83.7,58.6 80.9,73.9 72.5,66.9" fill="#a6d3f5"/>
<polygon points="64.2,83.7 69.7,86.5 65.6,90.7" fill="#a6d3f5"/>
<polygon points="92.1,41.8 96.2,41.8 94.3,45.2" fill="#a6d3f5"/>
<polygon points="667.8,0.0 734.7,0.0 729.1,7.0 720.8,9.8 723.6,22.3 713.8,12.6 681.7,8.4" fill="#a6d3f5"/>
<polygon points="582.7,26.5 589.7,27.9 586.9,32.1" fill="#a6d3f5"/>
<polygon points="765.4,206.4 784.9,196.7 790.5,203.6 776.6,216.2 762.6,217.6" fill="#a6d3f5"/>
<polygon points="989.7,44.6 993.9,46.0 992.5,54.4" fill="#a6d3f5"/>
<polygon points="1154.3,41.8 1158.4,43.2 1157.0,48.8" fill="#a6d3f5"/>
<polygon points="947.8,133.9 953.4,133.9 950.6,138.1" fill="#a6d3f5"/>
<polygon points="903.2,245.5 910.2,259.4 907.4,263.6 901.8,251.0" fill="#a6d3f5"/>
<polygon points="1331.1,111.6 1339.5,128.3 1328.3,131.1 1326.9,126.9 1333.9,122.7" fill="#a6d3f5"/>
<polygon points="1465.0,172.9 1469.2,172.9 1470.6,203.6 1466.4,203.6" fill="#a6d3f5"/>
<polygon points="1529.1,262.2 1545.9,255.2 1547.3,258.0 1534.7,263.6" fill="#a6d3f5"/>
<polyline points="80.9,2.8 89.3,25.1 122.7,34.0 150.6,26.5 159.0,41.8 192.5,39.1 203.6,50.8 206.4,80.9 189.7,94.8" fill="none" stroke="#9a9a9a" stroke-width="1.1" stroke-dasharray="2 2"/>
<polyline points="200.8,39.1 223.2,27.9 242.7,20.9 262.2,22.3" fill="none" stroke="#9a9a9a" stroke-width="1.1" stroke-dasharray="2 2"/>
<polyline points="603.6,0.0 600.8,25.1 578.5,39.1 567.4,72.5 539.5,100.4 525.5,117.2 506.0,106.0 489.3,108.8 466.9,119.9 455.8,136.7 475.3,150.6 483.7,139.5 483.7,167.4 489.3,195.3 528.3,200.8 539.5,228.7 536.7,245.5 508.8,251.0 517.2,297.1" fill="none" stroke="#9a9a9a" stroke-width="1.1" stroke-dasharray="2 2"/>
<polyline points="1241.8,0.0 1239.1,19.5 1250.2,36.3 1227.9,58.6 1230.7,92.1 1222.3,100.4 1253.0,111.6 1241.8,139.5 1247.4,178.5 1225.1,192.5 1227.9,228.7 1239.1,251.0 1230.7,267.8 1255.8,278.9 1236.3,297.1" fill="none" stroke="#9a9a9a" stroke-width="1.1" stroke-dasharray="2 2"/>
<polyline points="1283.7,58.6 1266.9,83.7 1286.5,72.5 1317.2,72.5 1356.2,64.2 1361.8,83.7 1384.1,86.5 1395.3,78.1 1439.9,66.9 1445.5,78.1 1456.6,83.7 1478.9,69.7 1506.8,83.7 1504.0,97.6" fill="none" stroke="#9a9a9a" stroke-width="1.1" stroke-dasharray="2 2"/>
<polyline points="298.5,0.0 302.6,41.8 306.8,83.7 302.6,117.2 292.9,142.3 278.9,170.2 269.2,198.0 278.9,223.2 292.9,245.5 302.6,267.8 311.0,297.1" fill="none" stroke="#f5cd62" stroke-width="2.18" stroke-linejoin="round" stroke-linecap="round"/>
<polyline points="0.0,53.0 66.9,51.6 108.8,66.9 152.0,58.6 181.3,54.4 212.0,44.6 219.0,0.0" fill="none" stroke="#f4d27a" stroke-width="1.52" stroke-linejoin="round" stroke-linecap="round"/>
<polyline points="152.0,58.6 136.7,80.9 115.8,97.6 83.7,111.6 41.8,128.3 37.7,156.2 36.3,195.3 30.7,217.6" fill="none" stroke="#f4d27a" stroke-width="1.52" stroke-linejoin="round" stroke-linecap="round"/>
<polyline points="281.7,167.4 245.5,156.2 225.9,172.9 209.2,181.3 195.3,203.6 164.6,237.1 133.9,259.4 119.9,270.6 117.2,297.1" fill="none" stroke="#f4d27a" stroke-width="1.52" stroke-linejoin="round" stroke-linecap="round"/>
<polyline points="262.2,256.6 320.8,265.0 362.6,251.0 400.0,244.1" fill="none" stroke="#f5cd62" stroke-width="2.39" stroke-linejoin="round" stroke-linecap="round"/>
<polyline points="265.0,256.6 242.7,273.4 228.7,297.1" fill="none" stroke="#f4d27a" stroke-width="1.74" stroke-linejoin="round" stroke-linecap="round"/>
<polyline points="287.3,172.9 320.8,181.3 362.6,195.3 400.0,214.8" fill="none" stroke="#f4d27a" stroke-width="1.52" stroke-linejoin="round" stroke-linecap="round"/>
<polyline points="309.6,181.3 343.1,156.2 359.8,142.3 359.8,122.7" fill="none" stroke="#f4d27a" stroke-width="1.52" stroke-linejoin="round" stroke-linecap="round"/>
<polyline points="5.6,217.6 25.1,242.7 44.6,265.0 48.8,297.1" fill="none" stroke="#f4d27a" stroke-width="1.52" stroke-linejoin="round" stroke-linecap="round"/>
<polyline points="224.5,145.0 224.5,174.3" fill="none" stroke="#f4d27a" stroke-width="1.09" stroke-linejoin="round" stroke-linecap="round"/>
<polyline points="390.5,83.7 400.0,72.5" fill="none" stroke="#f4d27a" stroke-width="1.52" stroke-linejoin="round" stroke-linecap="round"/>
<polyline points="390.5,214.8 396.1,245.5 400.0,297.1" fill="none" stroke="#f4d27a" stroke-width="1.31" stroke-linejoin="round" stroke-linecap="round"/>
<polyline points="416.7,16.7 439.1,27.9 478.1,39.1 506.0,66.9 533.9,111.6 556.2,133.9 595.3,150.6 612.0,167.4 628.7,178.5" fill="none" stroke="#f5cd62" stroke-width="1.96" stroke-linejoin="round" stroke-linecap="round"/>
<polyline points="439.1,27.9 436.3,83.7 450.2,94.8 430.7,167.4 436.3,195.3 422.3,223.2 400.0,237.1" fill="none" stroke="#f4d27a" stroke-width="1.52" stroke-linejoin="round" stroke-linecap="round"/>
<polyline points="400.0,237.1 433.5,234.3 469.7,228.7 511.6,212.0 556.2,195.3 595.3,184.1 628.7,179.9 678.9,195.3 706.8,212.0 748.7,228.7 800.0,239.9" fill="none" stroke="#f5cd62" stroke-width="2.39" stroke-linejoin="round" stroke-linecap="round"/>
<polyline points="480.9,33.5 506.0,22.3 533.9,16.7 545.0,5.6" fill="none" stroke="#f4d27a" stroke-width="1.52" stroke-linejoin="round" stroke-linecap="round"/>
<polyline points="536.7,11.2 543.7,27.9 539.5,72.5 517.2,106.0" fill="none" stroke="#f4d27a" stroke-width="1.52" stroke-linejoin="round" stroke-linecap="round"/>
<polyline points="600.8,153.4 600.8,111.6 631.5,106.0 645.5,75.3 653.8,41.8 648.3,0.0" fill="none" stroke="#f4d27a" stroke-width="1.52" stroke-linejoin="round" stroke-linecap="round"/>
<polyline points="645.5,75.3 678.9,83.7 734.7,72.5 800.0,80.9" fill="none" stroke="#f4d27a" stroke-width="1.52" stroke-linejoin="round" stroke-linecap="round"/>
<polyline points="662.2,16.7 706.8,27.9 748.7,33.5 790.5,27.9" fill="none" stroke="#f4d27a" stroke-width="1.52" stroke-linejoin="round" stroke-linecap="round"/>
<polyline points="612.0,167.4 628.7,200.8 617.6,237.1 595.3,297.1" fill="none" stroke="#f4d27a" stroke-width="1.52" stroke-linejoin="round" stroke-linecap="round"/>
<polyline points="400.0,78.1 422.3,72.5 455.8,66.9" fill="none" stroke="#f4d27a" stroke-width="1.31" stroke-linejoin="round" stroke-linecap="round"/>
<polyline points="506.0,11.2 517.2,0.0" fill="none" stroke="#f4d27a" stroke-width="1.31" stroke-linejoin="round" stroke-linecap="round"/>
<polyline points="800.0,16.7 841.8,19.5 892.1,33.5 945.0,39.1 967.4,55.8 995.3,55.8 1006.4,83.7 1034.3,106.0 1051.0,125.5 1067.8,156.2 1084.5,181.3 1106.8,212.0 1129.1,237.1 1145.9,267.8 1162.6,297.1" fill="none" stroke="#f4d27a" stroke-width="1.52" stroke-linejoin="round" stroke-linecap="round"/>
<polyline points="967.4,0.0 972.9,33.5 964.6,61.4 956.2,83.7 928.3,83.7" fill="none" stroke="#f4d27a" stroke-width="1.52" stroke-linejoin="round" stroke-linecap="round"/>
<polyline points="1000.8,156.2 1028.7,122.7 1037.1,106.0" fill="none" stroke="#f4d27a" stroke-width="1.52" stroke-linejoin="round" stroke-linecap="round"/>
<polyline points="1065.0,297.1 1106.8,278.9 1148.7,265.0 1200.0,245.5" fill="none" stroke="#f5cd62" stroke-width="2.39" stroke-linejoin="round" stroke-linecap="round"/>
<polyline points="1200.0,117.2 1190.5,167.4 1168.2,223.2 1157.0,278.9 1151.5,297.1" fill="none" stroke="#f4d27a" stroke-width="1.52" stroke-linejoin="round" stroke-linecap="round"/>
<polyline points="855.8,0.0 883.7,16.7" fill="none" stroke="#f4d27a" stroke-width="1.31" stroke-linejoin="round" stroke-linecap="round"/>
<polyline points="1200.0,50.2 1233.5,47.4 1283.7,27.9 1339.5,8.4 1395.3,0.0" fill="none" stroke="#f5cd62" stroke-width="2.18" stroke-linejoin="round" stroke-linecap="round"/>
<polyline points="1200.0,64.2 1241.8,61.4 1283.7,47.4 1333.9,22.3 1367.4,0.0" fill="none" stroke="#f4d27a" stroke-width="1.52" stroke-linejoin="round" stroke-linecap="round"/>
<polyline points="1219.5,0.0 1213.9,41.8 1216.7,83.7 1200.0,117.2" fill="none" stroke="#f4d27a" stroke-width="1.52" stroke-linejoin="round" stroke-linecap="round"/>
<polyline points="1308.8,36.3 1325.5,50.2 1331.1,83.7 1331.1,103.2 1345.0,145.0 1359.0,167.4 1367.4,203.6 1372.9,223.2" fill="none" stroke="#f4d27a" stroke-width="1.52" stroke-linejoin="round" stroke-linecap="round"/>
<polyline points="1328.3,133.9 1317.2,172.9 1311.6,200.8" fill="none" stroke="#f4d27a" stroke-width="1.52" stroke-linejoin="round" stroke-linecap="round"/>
<polyline points="1331.1,106.0 1367.4,108.8 1395.3,106.0 1423.2,110.2 1445.5,114.4 1478.9,114.4" fill="none" stroke="#f4d27a" stroke-width="1.52" stroke-linejoin="round" stroke-linecap="round"/>
<polyline points="1328.3,133.9 1372.9,125.5 1392.5,133.9 1434.3,128.3 1448.3,122.7 1456.6,150.6 1453.8,206.4 1462.2,237.1" fill="none" stroke="#f4d27a" stroke-width="1.52" stroke-linejoin="round" stroke-linecap="round"/>
<polyline points="1200.0,248.3 1272.5,223.2 1311.6,203.6 1367.4,206.4 1423.2,212.0 1445.5,223.2" fill="none" stroke="#f5cd62" stroke-width="2.18" stroke-linejoin="round" stroke-linecap="round"/>
<polyline points="1484.5,64.2 1484.5,195.3 1490.1,237.1 1487.3,267.8 1465.0,287.3 1462.2,297.1" fill="none" stroke="#f5cd62" stroke-width="1.96" stroke-linejoin="round" stroke-linecap="round"/>
<polyline points="1439.9,217.6 1473.4,200.8 1534.7,189.7 1562.6,161.8 1600.0,164.6 1628.2,159.0" fill="none" stroke="#f4d27a" stroke-width="1.52" stroke-linejoin="round" stroke-linecap="round"/>
<polyline points="1487.3,203.6 1534.7,181.3 1562.6,153.4 1628.2,145.0" fill="none" stroke="#f4d27a" stroke-width="1.52" stroke-linejoin="round" stroke-linecap="round"/>
<polyline points="1484.5,128.3 1520.8,122.7 1534.7,117.2 1600.0,111.6 1628.2,122.7" fill="none" stroke="#f4d27a" stroke-width="1.52" stroke-linejoin="round" stroke-linecap="round"/>
<polyline points="1462.2,242.7 1506.8,251.0 1562.6,265.0 1604.5,273.4 1628.2,278.9" fill="none" stroke="#f4d27a" stroke-width="1.52" stroke-linejoin="round" stroke-linecap="round"/>
<polyline points="1297.6,223.2 1317.2,251.0 1328.3,297.1" fill="none" stroke="#f4d27a" stroke-width="1.52" stroke-linejoin="round" stroke-linecap="round"/>
<polyline points="1428.7,242.7 1412.0,297.1" fill="none" stroke="#f4d27a" stroke-width="1.52" stroke-linejoin="round" stroke-linecap="round"/>
<polyline points="1473.4,242.7 1534.7,267.8 1562.6,297.1" fill="none" stroke="#f4d27a" stroke-width="1.52" stroke-linejoin="round" stroke-linecap="round"/>
<polyline points="1417.6,72.5 1445.5,64.2 1478.9,50.2 1495.7,0.0" fill="none" stroke="#f4d27a" stroke-width="1.52" stroke-linejoin="round" stroke-linecap="round"/>
<polyline points="1612.8,83.7 1618.4,100.4 1628.2,106.0" fill="none" stroke="#f4d27a" stroke-width="1.52" stroke-linejoin="round" stroke-linecap="round"/>
<polyline points="1456.6,0.0 1476.2,16.7 1495.7,0.0" fill="none" stroke="#f4d27a" stroke-width="1.31" stroke-linejoin="round" stroke-linecap="round"/>
<polyline points="846.0,214.7 887.0,191.2 945.6,182.4 1001.3,183.9 1027.6,164.9 1062.8,109.2 1092.0,80.0 1144.8,74.0 1194.0,50.6 1244.0,32.0 1294.0,22.0" fill="none" stroke="#f5cd62" stroke-width="2.24" stroke-linejoin="round" stroke-linecap="round"/>
<polyline points="816.7,210.0 849.0,173.7 872.3,120.9 884.0,74.0 887.0,50.6 890.0,30.0 884.0,0.8" fill="none" stroke="#f5cd62" stroke-width="1.92" stroke-linejoin="round" stroke-linecap="round"/>
<polyline points="784.0,217.0 754.0,182.0 734.0,142.0 704.0,102.0 691.0,82.0 649.0,75.0" fill="none" stroke="#f4d27a" stroke-width="1.60" stroke-linejoin="round" stroke-linecap="round"/>
<polyline points="839.0,262.0 887.0,285.0 925.0,290.8 1033.5,304.0" fill="none" stroke="#f5cd62" stroke-width="2.08" stroke-linejoin="round" stroke-linecap="round"/>
<polyline points="804.0,263.0 807.0,297.0" fill="none" stroke="#f4d27a" stroke-width="1.60" stroke-linejoin="round" stroke-linecap="round"/>
<polyline points="784.0,257.0 744.0,277.0 714.0,297.0" fill="none" stroke="#f4d27a" stroke-width="1.60" stroke-linejoin="round" stroke-linecap="round"/>
<polyline points="744.0,240.0 702.0,241.0 674.0,232.0 644.0,222.0 619.0,217.0" fill="none" stroke="#f4d27a" stroke-width="1.60" stroke-linejoin="round" stroke-linecap="round"/>
<polyline points="909.0,202.0 934.0,222.0 964.0,262.0 989.0,297.0" fill="none" stroke="#f4d27a" stroke-width="1.60" stroke-linejoin="round" stroke-linecap="round"/>
<polyline points="849.0,173.0 814.0,162.0 764.0,157.0 734.0,167.0" fill="none" stroke="#f4d27a" stroke-width="1.60" stroke-linejoin="round" stroke-linecap="round"/>
<polyline points="872.0,120.0 904.0,132.0 944.0,147.0 988.0,161.0" fill="none" stroke="#f4d27a" stroke-width="1.60" stroke-linejoin="round" stroke-linecap="round"/>
<ellipse cx="812" cy="236.5" rx="34" ry="27" fill="none" stroke="#f5cd62" stroke-width="1.87"/>
<polyline points="699.5,208.8 731.7,173.7 799.0,170.7 887.0,185.4 916.3,226.4 898.7,255.7 866.5,273.3 799.0,288.0 734.6,273.3 702.4,241.0 699.5,208.8" fill="none" stroke="#f4d27a" stroke-width="1.6" stroke-linejoin="round"/>
<polyline points="0.0,223.2 36.3,212.0 47.4,220.4 58.6,228.7 72.5,237.7 94.8,235.7 108.8,214.8 125.5,200.8 136.7,195.3 150.6,195.3 149.2,212.0 160.4,210.6 167.4,199.4 178.5,195.3 184.1,184.1 191.1,184.1 184.1,178.5 178.5,167.4 168.8,152.0 178.5,142.3 192.5,136.7 212.0,129.7 223.2,140.9 237.1,145.0 253.8,128.3 265.0,111.6 270.6,97.6 277.5,89.3 284.5,93.4 301.3,89.3 309.6,86.5 323.6,80.9 337.5,76.7 343.1,89.3 351.5,89.8 338.9,126.9 348.7,136.7 359.8,142.3 373.8,146.4 382.1,138.1 400.0,134.4" fill="none" stroke="#6f6f6f" stroke-width="1.5" stroke-linejoin="round"/>
<polyline points="373.8,0.0 362.6,16.7 365.4,30.7 357.0,50.2 348.7,68.3 362.6,69.7 379.4,69.7 384.9,83.7 400.0,92.1" fill="none" stroke="#6f6f6f" stroke-width="1.5" stroke-linejoin="round"/>
<polyline points="400.0,92.1 407.0,106.0 405.6,122.7 409.8,133.9 400.0,134.4" fill="none" stroke="#6f6f6f" stroke-width="1.5" stroke-linejoin="round"/>
<circle cx="740.5" cy="136.4" r="2.6" fill="#fff" stroke="#666" stroke-width="1.3"/>
<circle cx="936.8" cy="186.0" r="2.6" fill="#fff" stroke="#666" stroke-width="1.3"/>
<circle cx="748.4" cy="198.0" r="2.6" fill="#fff" stroke="#666" stroke-width="1.3"/>
<circle cx="839.5" cy="197.0" r="2.6" fill="#fff" stroke="#666" stroke-width="1.3"/>
<circle cx="865.0" cy="217.0" r="2.6" fill="#fff" stroke="#666" stroke-width="1.3"/>
<circle cx="794.0" cy="297.0" r="2.6" fill="#fff" stroke="#666" stroke-width="1.3"/>
<circle cx="988.0" cy="161.4" r="3.3" fill="#fff" stroke="#666" stroke-width="1.3"/>
<text x="695.0" y="131.0" font-size="14.0" fill="#656565" font-weight="400" stroke="#fff" stroke-width="2.4" stroke-opacity="0.85" paint-order="stroke" stroke-linejoin="round">Радошковичи</text>
<text x="718.0" y="192.5" font-size="14.4" fill="#656565" font-weight="400" stroke="#fff" stroke-width="2.4" stroke-opacity="0.85" paint-order="stroke" stroke-linejoin="round">Заславль</text>
<text x="729.0" y="291.5" font-size="14.4" fill="#656565" font-weight="400" stroke="#fff" stroke-width="2.4" stroke-opacity="0.85" paint-order="stroke" stroke-linejoin="round">Фаниполь</text>
<text x="956.8" y="154.8" font-size="17.1" fill="#555" font-weight="400" stroke="#fff" stroke-width="2.4" stroke-opacity="0.85" paint-order="stroke" stroke-linejoin="round">Жодино</text>
<text x="897.0" y="180.8" font-size="14.9" fill="#656565" font-weight="400" stroke="#fff" stroke-width="2.4" stroke-opacity="0.85" paint-order="stroke" stroke-linejoin="round">Смолевичи</text>
<text x="802.0" y="191.9" font-size="14.4" fill="#656565" font-weight="400" stroke="#fff" stroke-width="2.4" stroke-opacity="0.85" paint-order="stroke" stroke-linejoin="round">Боровляны</text>
<text x="869.2" y="222.6" font-size="14.9" fill="#656565" font-weight="400" stroke="#fff" stroke-width="2.4" stroke-opacity="0.85" paint-order="stroke" stroke-linejoin="round">Колодищи</text>
<rect x="876.7" y="55.0" width="24.3" height="13.2" fill="#d9595f" stroke="#fff" stroke-width="0.8"/><text x="888.9" y="65.6" font-size="11.5" font-weight="700" fill="#fff" text-anchor="middle">M3</text>
<rect x="733.0" y="163.4" width="31.0" height="13.2" fill="#d9595f" stroke="#fff" stroke-width="0.8"/><text x="748.5" y="174.0" font-size="11.5" font-weight="700" fill="#fff" text-anchor="middle">M14</text>
<rect x="635.0" y="177.0" width="25.0" height="13.7" fill="#d9595f" stroke="#fff" stroke-width="0.8"/><text x="647.5" y="188.1" font-size="11.5" font-weight="700" fill="#fff" text-anchor="middle">M6</text>
<rect x="822.0" y="256.3" width="24.0" height="12.6" fill="#d9595f" stroke="#fff" stroke-width="0.8"/><text x="834.0" y="266.3" font-size="11.5" font-weight="700" fill="#fff" text-anchor="middle">M9</text>
<rect x="914.0" y="285.0" width="24.3" height="13.0" fill="#d9595f" stroke="#fff" stroke-width="0.8"/><text x="926.1" y="295.4" font-size="11.5" font-weight="700" fill="#fff" text-anchor="middle">M4</text>
<text x="783.0" y="227.9" font-size="18.3" fill="#333" font-weight="700" stroke="#fff" stroke-width="2.4" stroke-opacity="0.85" paint-order="stroke" stroke-linejoin="round">Минск</text>
<circle cx="813.7" cy="237.20000000000005" r="4.2" fill="#fff" stroke="#222" stroke-width="1.6"/><circle cx="813.7" cy="237.20000000000005" r="1.8" fill="#222"/>
<circle cx="814" cy="235" r="196" fill="rgba(67,87,126,0.306)" stroke="#6a9ad8" stroke-width="1.5"/>
<circle cx="438.5" cy="29.5" r="2.6" fill="#fff" stroke="#666" stroke-width="1.3"/>
<circle cx="546.0" cy="6.6" r="2.6" fill="#fff" stroke="#666" stroke-width="1.3"/>
<circle cx="311.3" cy="75.5" r="2.6" fill="#fff" stroke="#666" stroke-width="1.3"/>
<circle cx="366.0" cy="121.8" r="2.6" fill="#fff" stroke="#666" stroke-width="1.3"/>
<circle cx="123.5" cy="110.7" r="2.6" fill="#fff" stroke="#666" stroke-width="1.3"/>
<circle cx="295.0" cy="137.6" r="2.6" fill="#fff" stroke="#666" stroke-width="1.3"/>
<circle cx="577.0" cy="163.4" r="2.6" fill="#fff" stroke="#666" stroke-width="1.3"/>
<circle cx="84.0" cy="177.0" r="2.6" fill="#fff" stroke="#666" stroke-width="1.3"/>
<circle cx="399.8" cy="225.0" r="2.6" fill="#fff" stroke="#666" stroke-width="1.3"/>
<circle cx="877.6" cy="30.7" r="2.6" fill="#fff" stroke="#666" stroke-width="1.3"/>
<circle cx="1180.4" cy="68.7" r="2.6" fill="#fff" stroke="#666" stroke-width="1.3"/>
<circle cx="1146.3" cy="263.0" r="2.6" fill="#fff" stroke="#666" stroke-width="1.3"/>
<circle cx="1307.8" cy="35.8" r="2.6" fill="#fff" stroke="#666" stroke-width="1.3"/>
<circle cx="1331.5" cy="101.4" r="2.6" fill="#fff" stroke="#666" stroke-width="1.3"/>
<circle cx="1446.0" cy="115.0" r="2.6" fill="#fff" stroke="#666" stroke-width="1.3"/>
<circle cx="1608.4" cy="85.0" r="2.6" fill="#fff" stroke="#666" stroke-width="1.3"/>
<circle cx="1311.5" cy="200.1" r="2.6" fill="#fff" stroke="#666" stroke-width="1.3"/>
<circle cx="1440.3" cy="255.4" r="2.6" fill="#fff" stroke="#666" stroke-width="1.3"/>
<circle cx="1604.3" cy="273.0" r="2.6" fill="#fff" stroke="#666" stroke-width="1.3"/>
<circle cx="1452.3" cy="8.4" r="2.6" fill="#fff" stroke="#666" stroke-width="1.3"/>
<circle cx="2.0" cy="40.0" r="2.6" fill="#fff" stroke="#666" stroke-width="1.3"/>
<circle cx="291.4" cy="241.6" r="3.3" fill="#fff" stroke="#666" stroke-width="1.3"/>
<circle cx="648.0" cy="75.5" r="3.3" fill="#fff" stroke="#666" stroke-width="1.3"/>
<circle cx="1034.0" cy="109.8" r="3.3" fill="#fff" stroke="#666" stroke-width="1.3"/>
<circle cx="1455.5" cy="237.6" r="3.3" fill="#fff" stroke="#666" stroke-width="1.3"/>
<text x="-8.0" y="15.0" font-size="15.3" fill="#444" font-weight="400" stroke="#fff" stroke-width="2.4" stroke-opacity="0.85" paint-order="stroke" stroke-linejoin="round">итус</text>
<text x="-2.0" y="33.5" font-size="15.3" fill="#444" font-weight="400" stroke="#fff" stroke-width="2.4" stroke-opacity="0.85" paint-order="stroke" stroke-linejoin="round">tu</text>
<text x="410.0" y="23.7" font-size="14.0" fill="#656565" font-weight="400" stroke="#fff" stroke-width="2.4" stroke-opacity="0.85" paint-order="stroke" stroke-linejoin="round">Ошмяны</text>
<text x="511.0" y="3.0" font-size="14.0" fill="#656565" font-weight="400" stroke="#fff" stroke-width="2.4" stroke-opacity="0.85" paint-order="stroke" stroke-linejoin="round">Сморгонь</text>
<text x="257.7" y="54.0" font-size="14.0" fill="#656565" font-weight="400" stroke="#fff" stroke-width="2.4" stroke-opacity="0.85" paint-order="stroke" stroke-linejoin="round">Шальчининкай</text>
<text x="275.0" y="68.8" font-size="14.0" fill="#656565" font-weight="400" stroke="#fff" stroke-width="2.4" stroke-opacity="0.85" paint-order="stroke" stroke-linejoin="round">Šalčininkai</text>
<text x="325.0" y="102.0" font-size="13.0" fill="#656565" font-weight="400" stroke="#fff" stroke-width="2.4" stroke-opacity="0.85" paint-order="stroke" stroke-linejoin="round">Девянишкес</text>
<text x="329.5" y="115.0" font-size="13.0" fill="#656565" font-weight="400" stroke="#fff" stroke-width="2.4" stroke-opacity="0.85" paint-order="stroke" stroke-linejoin="round">Dieveniškės</text>
<text x="129.4" y="107.7" font-size="16.2" fill="#555" font-weight="400" stroke="#fff" stroke-width="2.4" stroke-opacity="0.85" paint-order="stroke" stroke-linejoin="round">Варена</text>
<text x="129.0" y="124.4" font-size="16.2" fill="#555" font-weight="400" stroke="#fff" stroke-width="2.4" stroke-opacity="0.85" paint-order="stroke" stroke-linejoin="round">Varėna</text>
<text x="263.6" y="132.0" font-size="13.5" fill="#656565" font-weight="400" stroke="#fff" stroke-width="2.4" stroke-opacity="0.85" paint-order="stroke" stroke-linejoin="round">Вороново</text>
<text x="547.8" y="157.6" font-size="14.0" fill="#656565" font-weight="400" stroke="#fff" stroke-width="2.4" stroke-opacity="0.85" paint-order="stroke" stroke-linejoin="round">Воложин</text>
<text x="-4.0" y="172.4" font-size="16.2" fill="#555" font-weight="400" stroke="#fff" stroke-width="2.4" stroke-opacity="0.85" paint-order="stroke" stroke-linejoin="round">инкай</text>
<text x="-4.0" y="189.0" font-size="16.2" fill="#555" font-weight="400" stroke="#fff" stroke-width="2.4" stroke-opacity="0.85" paint-order="stroke" stroke-linejoin="round">nkai</text>
<text x="89.0" y="174.3" font-size="14.0" fill="#656565" font-weight="400" stroke="#fff" stroke-width="2.4" stroke-opacity="0.85" paint-order="stroke" stroke-linejoin="round">Марцинконис</text>
<text x="89.0" y="189.0" font-size="14.0" fill="#656565" font-weight="400" stroke="#fff" stroke-width="2.4" stroke-opacity="0.85" paint-order="stroke" stroke-linejoin="round">Marcinkonys</text>
<text x="272.0" y="234.3" font-size="17.1" fill="#555" font-weight="400" stroke="#fff" stroke-width="2.4" stroke-opacity="0.85" paint-order="stroke" stroke-linejoin="round">Лида</text>
<text x="383.7" y="219.0" font-size="14.0" fill="#656565" font-weight="400" stroke="#fff" stroke-width="2.4" stroke-opacity="0.85" paint-order="stroke" stroke-linejoin="round">Ивье</text>
<text x="303.0" y="305.0" font-size="14.0" fill="#656565" font-weight="400" stroke="#fff" stroke-width="2.4" stroke-opacity="0.85" paint-order="stroke" stroke-linejoin="round">Берёзовка</text>
<text x="603.6" y="68.3" font-size="17.1" fill="#555" font-weight="400" stroke="#fff" stroke-width="2.4" stroke-opacity="0.85" paint-order="stroke" stroke-linejoin="round">Молодечно</text>
<text x="839.0" y="25.0" font-size="14.0" fill="#656565" font-weight="400" stroke="#fff" stroke-width="2.4" stroke-opacity="0.85" paint-order="stroke" stroke-linejoin="round">Плещеницы</text>
<text x="1001.4" y="102.6" font-size="17.1" fill="#555" font-weight="400" stroke="#fff" stroke-width="2.4" stroke-opacity="0.85" paint-order="stroke" stroke-linejoin="round">Борисов</text>
<text x="1185.0" y="73.6" font-size="14.0" fill="#656565" font-weight="400" stroke="#fff" stroke-width="2.4" stroke-opacity="0.85" paint-order="stroke" stroke-linejoin="round">Крупки</text>
<text x="1280.9" y="30.1" font-size="14.0" fill="#656565" font-weight="400" stroke="#fff" stroke-width="2.4" stroke-opacity="0.85" paint-order="stroke" stroke-linejoin="round">Толочин</text>
<text x="1305.4" y="96.2" font-size="14.0" fill="#656565" font-weight="400" stroke="#fff" stroke-width="2.4" stroke-opacity="0.85" paint-order="stroke" stroke-linejoin="round">Круглое</text>
<text x="1424.5" y="109.6" font-size="14.0" fill="#656565" font-weight="400" stroke="#fff" stroke-width="2.4" stroke-opacity="0.85" paint-order="stroke" stroke-linejoin="round">Шклов</text>
<text x="1587.6" y="79.5" font-size="14.9" fill="#656565" font-weight="400" stroke="#fff" stroke-width="2.4" stroke-opacity="0.85" paint-order="stroke" stroke-linejoin="round">Горки</text>
<text x="1604.9" y="146.4" font-size="14.9" fill="#656565" font-weight="400" stroke="#fff" stroke-width="2.4" stroke-opacity="0.85" paint-order="stroke" stroke-linejoin="round">Дри</text>
<text x="1278.0" y="193.8" font-size="14.0" fill="#656565" font-weight="400" stroke="#fff" stroke-width="2.4" stroke-opacity="0.85" paint-order="stroke" stroke-linejoin="round">Белыничи</text>
<text x="1114.6" y="258.0" font-size="14.0" fill="#656565" font-weight="400" stroke="#fff" stroke-width="2.4" stroke-opacity="0.85" paint-order="stroke" stroke-linejoin="round">Березино</text>
<text x="1420.8" y="230.9" font-size="17.1" fill="#555" font-weight="400" stroke="#fff" stroke-width="2.4" stroke-opacity="0.85" paint-order="stroke" stroke-linejoin="round">Могилёв</text>
<text x="1413.3" y="271.0" font-size="14.0" fill="#656565" font-weight="400" stroke="#fff" stroke-width="2.4" stroke-opacity="0.85" paint-order="stroke" stroke-linejoin="round">Буйничи</text>
<text x="1584.2" y="267.7" font-size="14.0" fill="#656565" font-weight="400" stroke="#fff" stroke-width="2.4" stroke-opacity="0.85" paint-order="stroke" stroke-linejoin="round">Чау</text>
<rect x="285.5" y="22.8" width="26.5" height="12.2" fill="#68a040" stroke="#fff" stroke-width="0.8"/><text x="298.8" y="32.4" font-size="11.5" font-weight="700" fill="#fff" text-anchor="middle">E85</text>
<rect x="499.4" y="70.0" width="26.4" height="12.0" fill="#68a040" stroke="#fff" stroke-width="0.8"/><text x="512.6" y="79.4" font-size="11.5" font-weight="700" fill="#fff" text-anchor="middle">E28</text>
<rect x="270.0" y="151.7" width="31.0" height="13.2" fill="#d9595f" stroke="#fff" stroke-width="0.8"/><text x="285.5" y="162.3" font-size="11.5" font-weight="700" fill="#fff" text-anchor="middle">M11</text>
<rect x="424.0" y="230.0" width="24.7" height="13.0" fill="#d9595f" stroke="#fff" stroke-width="0.8"/><text x="436.4" y="240.4" font-size="11.5" font-weight="700" fill="#fff" text-anchor="middle">M6</text>
<rect x="1145.4" y="65.8" width="27.3" height="12.6" fill="#68a040" stroke="#fff" stroke-width="0.8"/><text x="1159.1" y="75.8" font-size="11.5" font-weight="700" fill="#fff" text-anchor="middle">E30</text>
<rect x="1046.7" y="287.0" width="23.3" height="13.0" fill="#d9595f" stroke="#fff" stroke-width="0.8"/><text x="1058.3" y="297.4" font-size="11.5" font-weight="700" fill="#fff" text-anchor="middle">M4</text>
<rect x="1274.3" y="214.4" width="23.7" height="13.8" fill="#d9595f" stroke="#fff" stroke-width="0.8"/><text x="1286.2" y="225.6" font-size="11.5" font-weight="700" fill="#fff" text-anchor="middle">M4</text>
<text x="487.9" y="186.3" font-size="17.9" fill="#3a8a4c" font-weight="400" stroke="#fff" stroke-width="2.4" stroke-opacity="0.85" paint-order="stroke" stroke-linejoin="round">Ландшафтный</text>
<text x="511.0" y="203.2" font-size="17.9" fill="#3a8a4c" font-weight="400" stroke="#fff" stroke-width="2.4" stroke-opacity="0.85" paint-order="stroke" stroke-linejoin="round">заказник</text>
<text x="493.4" y="220.6" font-size="17.9" fill="#3a8a4c" font-weight="400" stroke="#fff" stroke-width="2.4" stroke-opacity="0.85" paint-order="stroke" stroke-linejoin="round">Налибокский</text>
</g></svg>
<!--/MAP-->
<!--OVERLAYS-->
<!-- fullscreen control -->
<div class="abs" style="left:370px;top:782px;width:50px;height:50px;background:#fff;border-radius:3px;box-shadow:0 1px 4px rgba(0,0,0,.3)"></div>
<svg class="abs" style="left:370px;top:782px" width="50" height="50" viewBox="0 0 50 50">
  <path d="M14.2 20.5 V14 H20.7 M28.6 14 H35.1 V20.5 M35.1 28.4 V34.9 H28.6 M20.7 34.9 H14.2 V28.4" fill="none" stroke="#666" stroke-width="2.3"/>
</svg>
<!-- map type control -->
<div class="abs" style="left:1731px;top:782px;width:239px;height:50px;background:#fff;border-radius:3px;box-shadow:0 1px 4px rgba(0,0,0,.3)"></div>
<div class="abs" style="left:1837px;top:782px;width:1px;height:50px;background:#e6e6e6"></div>
<div class="abs" style="left:1753px;top:795px;font-size:23px;font-weight:700;color:#000;line-height:25px;white-space:nowrap;letter-spacing:-0.3px">Карта</div>
<div class="abs" style="left:1859px;top:795px;font-size:23.3px;color:#565656;line-height:25px;white-space:nowrap">Спутник</div>
<!-- chat bubble -->
<div class="abs" style="left:1946px;top:963px;width:77px;height:77px;border-radius:50%;background:#23cf66;box-shadow:0 2px 10px rgba(0,0,0,.22)"></div>
<svg class="abs" style="left:1946px;top:963px" width="77" height="77" viewBox="0 0 77 77">
  <path d="M24 18.5 H52.5 Q56 18.5 56 22 V59 L47 55 H24 Q20.5 55 20.5 51.5 V22 Q20.5 18.5 24 18.5 Z" fill="#fff"/>
  <path d="M27 43 Q38 50 49 43" fill="none" stroke="#23cf66" stroke-width="2.6" stroke-linecap="round"/>
</svg>
<!-- window corner -->
<svg class="abs" style="left:2036px;top:1053px" width="12" height="12" viewBox="0 0 12 12"><path d="M12 0 V12 H0 Q12 12 12 0 Z" fill="#000"/></svg>
<!--/OVERLAYS-->
</body></html>
